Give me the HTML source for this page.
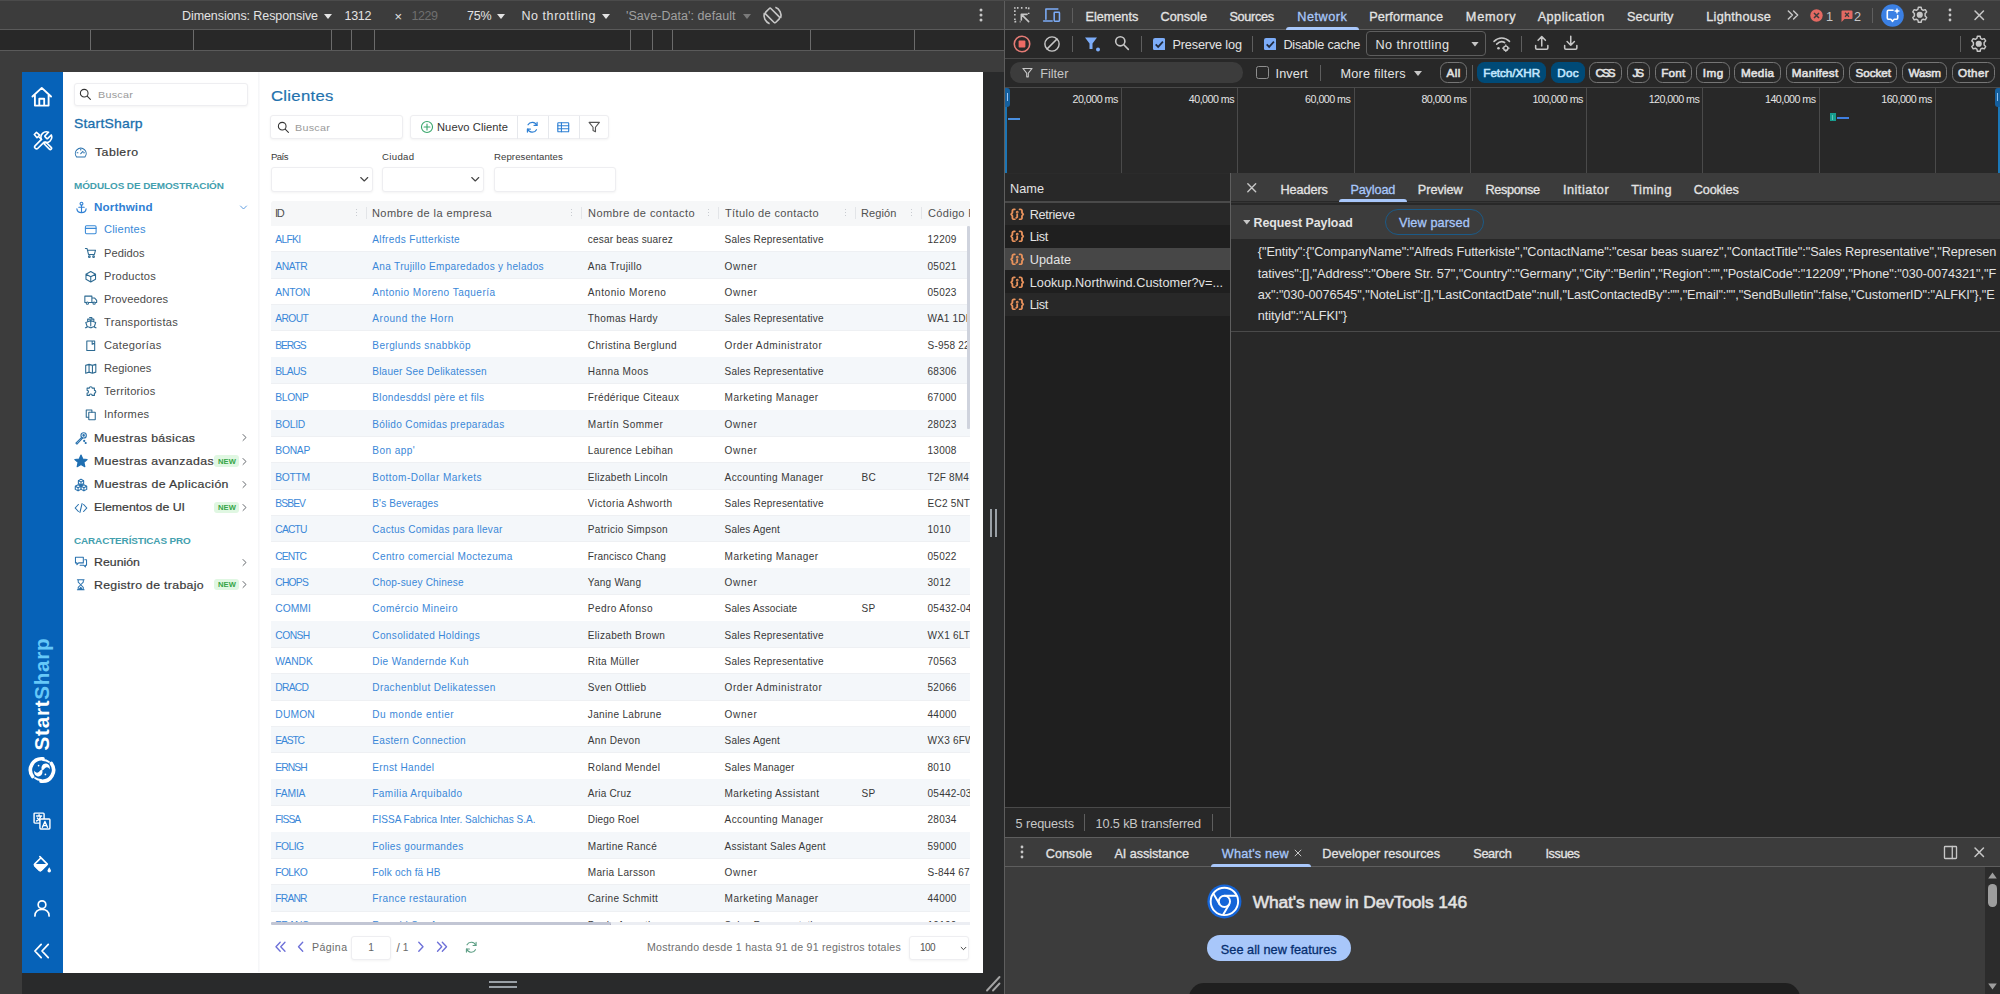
<!DOCTYPE html>
<html><head><meta charset="utf-8"><title>Clientes</title>
<style>
html,body{margin:0;padding:0;background:#282828;}
body{width:2000px;height:994px;position:relative;overflow:hidden;font-family:"Liberation Sans",sans-serif;}
body div,body span,body svg{position:absolute;box-sizing:border-box;}
span{white-space:nowrap;}
.m{-webkit-text-stroke:0.3px currentColor;}
.m3{-webkit-text-stroke:0.55px currentColor;}
.m2{-webkit-text-stroke:0.2px currentColor;}
</style></head><body>
<div style="left:0px;top:0px;width:1004px;height:994px;background:#3c3c3c;"></div>
<div style="left:0px;top:29px;width:1004px;height:1px;background:#5a5a5a;"></div>
<div style="left:0px;top:30px;width:1004px;height:20px;background:#282828;"></div>
<div style="left:0px;top:50px;width:1004px;height:1px;background:#5a5a5a;"></div>
<div style="left:90px;top:30px;width:1px;height:20px;background:#6b6b6b;"></div>
<div style="left:193px;top:30px;width:1px;height:20px;background:#6b6b6b;"></div>
<div style="left:331px;top:30px;width:1px;height:20px;background:#6b6b6b;"></div>
<div style="left:351px;top:30px;width:1px;height:20px;background:#6b6b6b;"></div>
<div style="left:374px;top:30px;width:1px;height:20px;background:#6b6b6b;"></div>
<div style="left:630px;top:30px;width:1px;height:20px;background:#6b6b6b;"></div>
<div style="left:652px;top:30px;width:1px;height:20px;background:#6b6b6b;"></div>
<div style="left:672px;top:30px;width:1px;height:20px;background:#6b6b6b;"></div>
<div style="left:810px;top:30px;width:1px;height:20px;background:#6b6b6b;"></div>
<div style="left:914px;top:30px;width:1px;height:20px;background:#6b6b6b;"></div>
<div style="left:983px;top:72px;width:21px;height:922px;background:#292a2b;"></div>
<div style="left:22px;top:972px;width:982px;height:22px;background:#292a2b;"></div>
<div style="left:489px;top:981px;width:28px;height:2px;background:#9aa0a6;"></div>
<div style="left:489px;top:986px;width:28px;height:2px;background:#9aa0a6;"></div>
<div style="left:990px;top:509px;width:2px;height:28px;background:#9aa0a6;"></div>
<div style="left:995px;top:509px;width:2px;height:28px;background:#9aa0a6;"></div>
<svg style="left:985px;top:975px" width="16" height="17" viewBox="0 0 16 17"><path d="M2 15.5 L14.5 2 M8 15.5 L14.5 8.5" stroke="#a4a4a4" stroke-width="1.9" stroke-linecap="round" fill="none"/></svg>
<span style="left:182px;top:9px;line-height:14px;font-size:12.5px;color:#e3e3e3;letter-spacing:-0.074px;">Dimensions: Responsive</span>
<svg style="left:323.5px;top:13.5px" width="8" height="5" viewBox="0 0 8 5"><path d="M0 0H8L4 5Z" fill="#e3e3e3"/></svg>
<span style="left:344.5px;top:9px;line-height:14px;font-size:12.5px;color:#e3e3e3;letter-spacing:-0.270px;">1312</span>
<span style="left:394.5px;top:9px;line-height:15px;font-size:13px;color:#e3e3e3;">×</span>
<span style="left:411.5px;top:9px;line-height:14px;font-size:12.5px;color:#6f6f6f;letter-spacing:-0.436px;">1229</span>
<span style="left:467px;top:9px;line-height:14px;font-size:12.5px;color:#e3e3e3;letter-spacing:-0.259px;">75%</span>
<svg style="left:496.5px;top:13.5px" width="8" height="5" viewBox="0 0 8 5"><path d="M0 0H8L4 5Z" fill="#e3e3e3"/></svg>
<span style="left:521.5px;top:9px;line-height:14px;font-size:12.5px;color:#e3e3e3;letter-spacing:0.550px;">No throttling</span>
<svg style="left:601.5px;top:13.5px" width="8" height="5" viewBox="0 0 8 5"><path d="M0 0H8L4 5Z" fill="#e3e3e3"/></svg>
<span style="left:626px;top:9px;line-height:14px;font-size:12.5px;color:#a0a0a0;letter-spacing:0.063px;">'Save-Data': default</span>
<svg style="left:742.5px;top:13.5px" width="8" height="5" viewBox="0 0 8 5"><path d="M0 0H8L4 5Z" fill="#7a7a7a"/></svg>
<svg style="left:761px;top:4px" width="23" height="23" viewBox="0 0 24 24" fill="none" stroke="#c7c7c7" stroke-width="1.7"><rect x="8" y="4.5" width="8" height="15" rx="1.5" transform="rotate(-45 12 12)"/><path d="M3.5 9.5 A9 9 0 0 0 9 20.5 M20.5 14.5 A9 9 0 0 0 15 3.5"/></svg>
<svg style="left:977.5px;top:7.0px" width="6" height="16" viewBox="0 0 6 16"><circle cx="3" cy="3" r="1.5" fill="#c7c7c7"/><circle cx="3" cy="8" r="1.5" fill="#c7c7c7"/><circle cx="3" cy="13" r="1.5" fill="#c7c7c7"/></svg>
<div style="left:22px;top:72px;width:961.2px;height:900.7px;background:#ffffff;"></div>
<div style="left:22px;top:72px;width:40.6px;height:900.7px;background:#0662b8;"></div>
<svg style="left:30.45px;top:85.25px" width="23.5" height="23.5" viewBox="0 0 24 24" fill="none" stroke="#ffffff" stroke-width="1.9" stroke-linecap="round" stroke-linejoin="round" ><path d="M2.5 11.8 L12 3 L21.5 11.800 M5 10.2 V21 H19 V10.2 M9.5 21 V14 H14.5 V21"/></svg>
<svg style="left:31.55px;top:130.45px" width="21.5" height="21.5" viewBox="0 0 24 24" fill="none" stroke="#ffffff" stroke-width="1.8" stroke-linecap="round" stroke-linejoin="round" ><path d="M14.7 6.3 a1 1 0 0 0 0 1.4 l1.6 1.6 a1 1 0 0 0 1.4 0 l3.77 -3.77 a6 6 0 0 1 -7.94 7.94 l-6.91 6.91 a2.12 2.12 0 0 1 -3 -3 l6.91 -6.91 a6 6 0 0 1 7.94 -7.94 l-3.76 3.76 z"/><path d="M2.6 5 L5 2.6 L8.6 5.6 L5.6 8.6 Z M7.3 7.3 L10.6 10.6 M13.4 15.4 L15.4 13.4 L21.4 19.4 a1.4 1.4 0 0 1 -2 2 Z"/></svg>
<span style="left:42px;top:693.8px;transform:translate(-50%,-50%) rotate(-90deg);font-size:20.6px;font-weight:700;color:#fff;letter-spacing:0.75px;line-height:24px">Start<span style="position:static;color:#66c8f8;">Sharp</span></span>
<svg style="left:28.30px;top:755.80px" width="28" height="28" viewBox="0 0 28 28" fill="none" ><g stroke="#fff" fill="none" stroke-linecap="round"><path d="M15 2.8 A11.2 11.2 0 0 0 4.600 20.5" stroke-width="3.6"/><path d="M13 25.2 A11.2 11.2 0 0 0 23.4 7.5" stroke-width="3.6"/><path d="M7 22 A10 10 0 0 0 13 24" stroke-width="1.8"/><path d="M21 6 A10 10 0 0 0 15 4" stroke-width="1.8"/></g><g fill="#fff"><path d="M14 14.5 C12.4 10.8 14.8 7.2 18.2 7.6 C21 8 22.4 10.6 21.6 13.4 C20.8 11.2 18.6 10.8 17.2 12 C16 13 15.800 14.2 14 14.5Z"/><path d="M14 13.5 C15.6 17.2 13.2 20.8 9.8 20.4 C7 20 5.6 17.4 6.4 14.6 C7.2 16.8 9.4 17.2 10.8 16 C12 15 12.200 13.8 14 13.5Z"/></g><circle cx="10.6" cy="9.6" r="0.85" fill="#fff"/><circle cx="17.4" cy="18.4" r="0.85" fill="#fff"/></svg>
<svg style="left:32.00px;top:811.00px" width="20" height="20" viewBox="0 0 24 24" fill="none" stroke="#ffffff" stroke-width="1.7" stroke-linecap="round" stroke-linejoin="round" ><rect x="2.5" y="2.5" width="12" height="12" rx="1"/><rect x="9.5" y="9.5" width="12" height="12" rx="1" fill="#0662b8"/><path d="M5.5 6 H11.5 M8.5 4.5 V6 M10.5 6 C10 9 8 11 5.5 12 M6.5 8.5 C7.5 10 8 10.5 9 11"/><path d="M12.5 19.5 L15.5 12.5 L18.5 19.5 M13.5 17.5 H17.5" /></svg>
<svg style="left:31.50px;top:853.50px" width="21" height="21" viewBox="0 0 24 24" fill="none" stroke="#ffffff" stroke-width="1.9" stroke-linecap="round" stroke-linejoin="round" ><path d="M9 3 L17.5 11.5 L10.5 18.5 A1.5 1.5 0 0 1 8.4 18.5 L3.2 13.3 A1.5 1.5 0 0 1 3.2 11.2 L10.3 4.3"/><path d="M3.5 12.5 H16.5 L10.5 18.5 A1.5 1.5 0 0 1 8.4 18.5 L3.2 13.3Z" fill="#fff"/><path d="M19.7 15 C21 17 21.7 18.2 21.7 19.2 A2 2 0 0 1 17.7 19.2 C17.7 18.2 18.4 17 19.7 15Z" fill="#fff" stroke="none"/></svg>
<svg style="left:32.00px;top:898.00px" width="20" height="20" viewBox="0 0 24 24" fill="none" stroke="#ffffff" stroke-width="2" stroke-linecap="round" stroke-linejoin="round" ><circle cx="12" cy="8" r="4.6"/><path d="M3.5 21.5 C3.5 16 7.5 13.6 12 13.6 C16.5 13.6 20.5 16 20.5 21.5"/></svg>
<svg style="left:31.50px;top:940.50px" width="20" height="20" viewBox="0 0 24 24" fill="none" stroke="#ffffff" stroke-width="2.1" stroke-linecap="round" stroke-linejoin="round" ><path d="M11 4 L3.5 12 L11 20 M19.5 4 L12 12 L19.5 20"/></svg>
<div style="left:258px;top:72px;width:2px;height:900px;background:linear-gradient(90deg,#f4f5f7,#fbfbfc);"></div>
<div style="left:73.5px;top:82.5px;width:174px;height:23.5px;background:#fff;border:1px solid #eeeef1;border-radius:3px;box-shadow:0 1px 2.500px rgba(0,0,0,.05);"></div>
<svg style="left:78.10px;top:87.10px" width="14.2" height="14.2" viewBox="0 0 24 24" fill="none" stroke="#333" stroke-width="1.8" stroke-linecap="round" stroke-linejoin="round" ><circle cx="10.5" cy="10.5" r="6.5"/><path d="M15.5 15.5 L21 21"/></svg>
<span style="left:97.7px;top:89px;line-height:11px;font-size:9.8px;color:#9a9a9a;letter-spacing:0.227px;transform:scaleX(1.1);transform-origin:0 0;">Buscar</span>
<span class="m" style="left:73.8px;top:116px;line-height:15px;font-size:13.2px;color:#1b6fad;letter-spacing:0.179px;transform:scaleX(1.06);transform-origin:0 0;">StartSharp</span>
<svg style="left:74.45px;top:145.85px" width="13.5" height="13.5" viewBox="0 0 24 24" fill="none" stroke="#2a72ae" stroke-width="1.9" stroke-linecap="round" stroke-linejoin="round" ><path d="M4.6 19.5 A9.6 9.6 0 1 1 19.400 19.5 Z"/><path d="M12 13.5 L16 9.500 M12 5.5 V7 M5.5 12 H7 M17 12 H18.5"/></svg>
<span class="m2" style="left:94.5px;top:146px;line-height:12px;font-size:11.2px;color:#3a3a3a;letter-spacing:0.408px;transform:scaleX(1.1);transform-origin:0 0;">Tablero</span>
<span style="left:73.7px;top:181px;line-height:10px;font-size:9.2px;color:#43a0ae;font-weight:700;letter-spacing:-0.072px;transform:scaleX(1.08);transform-origin:0 0;">MÓDULOS DE DEMOSTRACIÓN</span>
<svg style="left:74.50px;top:200.50px" width="13" height="13" viewBox="0 0 24 24" fill="none" stroke="#2f80d4" stroke-width="2.1" stroke-linecap="round" stroke-linejoin="round" ><circle cx="12" cy="5" r="2.6"/><path d="M12 7.6 V21.5 M7 11.5 H17 M3.5 14.5 C4 19 8 21.5 12 21.5 C16 21.5 20 19 20.5 14.5"/></svg>
<span style="left:94.3px;top:201px;line-height:12px;font-size:11px;color:#2f80d4;font-weight:700;letter-spacing:0.113px;transform:scaleX(1.06);transform-origin:0 0;">Northwind</span>
<svg style="left:239.20px;top:202.80px" width="9" height="9" viewBox="0 0 24 24" fill="none" stroke="#5a9be0" stroke-width="2.6" stroke-linecap="round" stroke-linejoin="round" ><path d="M4 8 L12 16 L20 8"/></svg>
<svg style="left:84.25px;top:222.95px" width="13.5" height="13.5" viewBox="0 0 24 24" fill="none" stroke="#3a8ad8" stroke-width="1.9" stroke-linecap="round" stroke-linejoin="round" ><rect x="2.5" y="5" width="19" height="14" rx="2"/><path d="M2.5 9.5 H21.5"/></svg>
<span style="left:104.4px;top:224px;line-height:11px;font-size:10.4px;color:#3a8ad8;letter-spacing:0.173px;transform:scaleX(1.07);transform-origin:0 0;">Clientes</span>
<svg style="left:84.25px;top:246.45px" width="13.5" height="13.5" viewBox="0 0 24 24" fill="none" stroke="#2d6a92" stroke-width="1.9" stroke-linecap="round" stroke-linejoin="round" ><path d="M2.5 4.5 H5.5 L8 15 H18.5 L20.5 7.5 H6.3"/><circle cx="9.5" cy="19" r="1.5"/><circle cx="17" cy="19" r="1.5"/></svg>
<span style="left:104.4px;top:248px;line-height:11px;font-size:10.4px;color:#4a4a4a;letter-spacing:0.075px;transform:scaleX(1.07);transform-origin:0 0;">Pedidos</span>
<svg style="left:84.25px;top:269.85px" width="13.5" height="13.5" viewBox="0 0 24 24" fill="none" stroke="#2d6a92" stroke-width="1.9" stroke-linecap="round" stroke-linejoin="round" ><path d="M12 2.8 L20.5 7.4 V16.6 L12 21.2 L3.5 16.6 V7.4 Z M3.5 7.4 L12 12 L20.5 7.4 M12 12 V21.2"/></svg>
<span style="left:104.4px;top:271px;line-height:11px;font-size:10.4px;color:#4a4a4a;letter-spacing:0.198px;transform:scaleX(1.07);transform-origin:0 0;">Productos</span>
<svg style="left:84.25px;top:293.25px" width="13.5" height="13.5" viewBox="0 0 24 24" fill="none" stroke="#2d6a92" stroke-width="1.9" stroke-linecap="round" stroke-linejoin="round" ><path d="M1.5 5.5 H14 V17 H1.5 Z M14 9 H19 L22.5 13 V17 H14"/><circle cx="6" cy="18" r="2" fill="#fff"/><circle cx="18" cy="18" r="2" fill="#fff"/></svg>
<span style="left:104.4px;top:294px;line-height:11px;font-size:10.4px;color:#4a4a4a;letter-spacing:0.094px;transform:scaleX(1.07);transform-origin:0 0;">Proveedores</span>
<svg style="left:84.25px;top:315.65px" width="13.5" height="13.5" viewBox="0 0 24 24" fill="none" stroke="#2d6a92" stroke-width="1.9" stroke-linecap="round" stroke-linejoin="round" ><path d="M10 2.8 H14 V5.5 M6.5 10.3 V5.5 H17.5 V10.3 M12 8.2 L3.2 11.6 L5.6 18.6 M12 8.2 L20.8 11.6 L18.4 18.6 M12 8.2 V17.5 M2.5 20.8 C4.5 20.8 5 19 7 19 C9 19 10 20.8 12 20.8 C14 20.8 15 19 17 19 C19 19 19.5 20.8 21.5 20.8"/></svg>
<span style="left:104.4px;top:317px;line-height:11px;font-size:10.4px;color:#4a4a4a;letter-spacing:0.274px;transform:scaleX(1.07);transform-origin:0 0;">Transportistas</span>
<svg style="left:84.25px;top:338.85px" width="13.5" height="13.5" viewBox="0 0 24 24" fill="none" stroke="#2d6a92" stroke-width="1.9" stroke-linecap="round" stroke-linejoin="round" ><path d="M5 3.5 H19 V20.5 H5 Z M14.5 3.5 V9.5 L16.7 8 L19 9.5"/></svg>
<span style="left:104.4px;top:340px;line-height:11px;font-size:10.4px;color:#4a4a4a;letter-spacing:0.298px;transform:scaleX(1.07);transform-origin:0 0;">Categorías</span>
<svg style="left:84.25px;top:361.95px" width="13.5" height="13.5" viewBox="0 0 24 24" fill="none" stroke="#2d6a92" stroke-width="1.9" stroke-linecap="round" stroke-linejoin="round" ><path d="M3 6 L9 4 L15 6 L21 4 V18 L15 20 L9 18 L3 20 Z M9 4 V18 M15 6 V20"/></svg>
<span style="left:104.4px;top:363px;line-height:11px;font-size:10.4px;color:#4a4a4a;letter-spacing:0.038px;transform:scaleX(1.07);transform-origin:0 0;">Regiones</span>
<svg style="left:84.25px;top:384.65px" width="13.5" height="13.5" viewBox="0 0 24 24" fill="none" stroke="#2d6a92" stroke-width="1.9" stroke-linecap="round" stroke-linejoin="round" ><path d="M9.5 5.5 A2.5 2.5 0 1 1 14.5 5.5 H18.5 V9.5 A2.5 2.5 0 1 1 18.5 14.5 V18.5 H14.5 A2.5 2.5 0 1 0 9.5 18.5 H5.5 V14.5 A2.5 2.5 0 1 0 5.5 9.5 V5.5 Z"/></svg>
<span style="left:104.4px;top:386px;line-height:11px;font-size:10.4px;color:#4a4a4a;letter-spacing:0.229px;transform:scaleX(1.07);transform-origin:0 0;">Territorios</span>
<svg style="left:84.25px;top:407.95px" width="13.5" height="13.5" viewBox="0 0 24 24" fill="none" stroke="#2d6a92" stroke-width="1.9" stroke-linecap="round" stroke-linejoin="round" ><path d="M4 3.5 H14 V7.5 M4 3.5 V16.5 H8"/><rect x="8.5" y="7.5" width="11.5" height="13.5" rx="0.5"/></svg>
<span style="left:104.4px;top:409px;line-height:11px;font-size:10.4px;color:#4a4a4a;letter-spacing:0.255px;transform:scaleX(1.07);transform-origin:0 0;">Informes</span>
<svg style="left:74.00px;top:430.90px" width="14" height="14" viewBox="0 0 24 24" fill="none" stroke="#2a72ae" stroke-width="1.9" stroke-linecap="round" stroke-linejoin="round" ><circle cx="16.5" cy="7.5" r="4.6"/><circle cx="16.5" cy="7.5" r="1.2" fill="#2a72ae"/><path d="M13.2 10.8 L3.2 20.8 L5 22.4 L14.8 12.4" /><circle cx="17.5" cy="17" r="0.9" fill="#2a72ae"/><circle cx="20" cy="20.5" r="0.9" fill="#2a72ae"/></svg>
<span class="m2" style="left:94.3px;top:432px;line-height:12px;font-size:11.2px;color:#3a3a3a;letter-spacing:0.318px;transform:scaleX(1.1);transform-origin:0 0;">Muestras básicas</span>
<svg style="left:240.00px;top:433.40px" width="9" height="9" viewBox="0 0 24 24" fill="none" stroke="#5f6368" stroke-width="2.6" stroke-linecap="round" stroke-linejoin="round" ><path d="M8 4 L16 12 L8 20"/></svg>
<svg style="left:74.00px;top:454.30px" width="14" height="14" viewBox="0 0 24 24" fill="none" stroke="#2a72ae" stroke-width="1.9" stroke-linecap="round" stroke-linejoin="round" ><path d="M12 1.8 L15.1 8.6 L22.5 9.4 L17 14.4 L18.6 21.8 L12 18 L5.4 21.8 L7 14.4 L1.5 9.4 L8.9 8.6 Z" fill="#1f6fb2" stroke="#1f6fb2"/></svg>
<span class="m2" style="left:94.3px;top:455px;line-height:12px;font-size:11.2px;color:#3a3a3a;letter-spacing:0.322px;transform:scaleX(1.1);transform-origin:0 0;">Muestras avanzadas</span>
<svg style="left:240.00px;top:456.80px" width="9" height="9" viewBox="0 0 24 24" fill="none" stroke="#5f6368" stroke-width="2.6" stroke-linecap="round" stroke-linejoin="round" ><path d="M8 4 L16 12 L8 20"/></svg>
<div style="left:214.3px;top:455.3px;width:24.4px;height:11.6px;background:#e0f7e2;border-radius:3px;"></div>
<span style="left:218px;top:457px;line-height:9px;font-size:7.6px;color:#36a546;font-weight:700;letter-spacing:0.084px;">NEW</span>
<svg style="left:74.00px;top:477.70px" width="14" height="14" viewBox="0 0 24 24" fill="none" stroke="#2a72ae" stroke-width="1.9" stroke-linecap="round" stroke-linejoin="round" ><path d="M12 2 L16.5 4.5 V9.5 L12 12 L7.500 9.5 V4.5 Z M7.5 4.5 L12 7 L16.5 4.5 M12 7 V12 M7 11.5 L11.8 14 V19.5 L7 22 L2.2 19.5 V14 Z M2.2 14 L7 16.6 L11.8 14 M7 16.6 V22 M17 11.5 L21.8 14 V19.5 L17 22 L12.2 19.5 V14 Z M12.2 14 L17 16.6 L21.8 14 M17 16.6 V22"/></svg>
<span class="m2" style="left:94.3px;top:478px;line-height:12px;font-size:11.2px;color:#3a3a3a;letter-spacing:0.342px;transform:scaleX(1.1);transform-origin:0 0;">Muestras de Aplicación</span>
<svg style="left:240.00px;top:480.20px" width="9" height="9" viewBox="0 0 24 24" fill="none" stroke="#5f6368" stroke-width="2.6" stroke-linecap="round" stroke-linejoin="round" ><path d="M8 4 L16 12 L8 20"/></svg>
<svg style="left:74.00px;top:500.50px" width="14" height="14" viewBox="0 0 24 24" fill="none" stroke="#2a72ae" stroke-width="1.9" stroke-linecap="round" stroke-linejoin="round" ><path d="M7.5 6 L2 12 L7.5 18 M16.5 6 L22 12 L16.5 18 M13.8 4.5 L10.2 19.5"/></svg>
<span class="m2" style="left:94.3px;top:501px;line-height:12px;font-size:11.2px;color:#3a3a3a;letter-spacing:0.001px;transform:scaleX(1.1);transform-origin:0 0;">Elementos de UI</span>
<svg style="left:240.00px;top:503.00px" width="9" height="9" viewBox="0 0 24 24" fill="none" stroke="#5f6368" stroke-width="2.6" stroke-linecap="round" stroke-linejoin="round" ><path d="M8 4 L16 12 L8 20"/></svg>
<div style="left:214.3px;top:501.5px;width:24.4px;height:11.6px;background:#e0f7e2;border-radius:3px;"></div>
<span style="left:218px;top:503px;line-height:9px;font-size:7.6px;color:#36a546;font-weight:700;letter-spacing:0.084px;">NEW</span>
<span style="left:73.7px;top:536px;line-height:10px;font-size:9.2px;color:#43a0ae;font-weight:700;letter-spacing:-0.120px;transform:scaleX(1.08);transform-origin:0 0;">CARACTERÍSTICAS PRO</span>
<svg style="left:74.00px;top:555.00px" width="14" height="14" viewBox="0 0 24 24" fill="none" stroke="#2a72ae" stroke-width="1.8" stroke-linecap="round" stroke-linejoin="round" ><path d="M2.5 4 H16 V13.5 H8 L5 16.5 V13.5 H2.5 Z M18.5 8 H21.5 V17.5 H19.5 V20.5 L16.5 17.5 H10.5"/></svg>
<span class="m2" style="left:94.3px;top:556px;line-height:12px;font-size:11.2px;color:#3a3a3a;letter-spacing:0.016px;transform:scaleX(1.1);transform-origin:0 0;">Reunión</span>
<svg style="left:240.00px;top:557.50px" width="9" height="9" viewBox="0 0 24 24" fill="none" stroke="#5f6368" stroke-width="2.6" stroke-linecap="round" stroke-linejoin="round" ><path d="M8 4 L16 12 L8 20"/></svg>
<svg style="left:74.25px;top:578.25px" width="13.5" height="13.5" viewBox="0 0 24 24" fill="none" stroke="#2a72ae" stroke-width="1.8" stroke-linecap="round" stroke-linejoin="round" ><path d="M6 3 H18 M6 21 H18 M7.5 3 V7.5 L12 12 L16.5 7.5 V3 M7.5 21 V16.5 L12 12 L16.5 16.5 V21"/><path d="M9 20.5 L12 16.5 L15 20.5Z" fill="#2a72ae"/></svg>
<span class="m2" style="left:94.3px;top:579px;line-height:12px;font-size:11.2px;color:#3a3a3a;letter-spacing:0.283px;transform:scaleX(1.1);transform-origin:0 0;">Registro de trabajo</span>
<svg style="left:240.00px;top:580.30px" width="9" height="9" viewBox="0 0 24 24" fill="none" stroke="#5f6368" stroke-width="2.6" stroke-linecap="round" stroke-linejoin="round" ><path d="M8 4 L16 12 L8 20"/></svg>
<div style="left:214.3px;top:578.8px;width:24.4px;height:11.6px;background:#e0f7e2;border-radius:3px;"></div>
<span style="left:218px;top:580px;line-height:9px;font-size:7.6px;color:#36a546;font-weight:700;letter-spacing:0.084px;">NEW</span>
<span class="m2" style="left:271px;top:87px;line-height:17px;font-size:15.2px;color:#1f72ae;letter-spacing:0.259px;transform:scaleX(1.1);transform-origin:0 0;">Clientes</span>
<div style="left:270.2px;top:115.3px;width:133.3px;height:24.2px;background:#fff;border:1px solid #eeeef1;border-radius:3px;box-shadow:0 1px 2.500px rgba(0,0,0,.05);"></div>
<svg style="left:276.10px;top:120.10px" width="14.2" height="14.2" viewBox="0 0 24 24" fill="none" stroke="#333" stroke-width="1.8" stroke-linecap="round" stroke-linejoin="round" ><circle cx="10.5" cy="10.5" r="6.5"/><path d="M15.5 15.5 L21 21"/></svg>
<span style="left:294.7px;top:122px;line-height:11px;font-size:9.8px;color:#9a9a9a;letter-spacing:0.227px;transform:scaleX(1.1);transform-origin:0 0;">Buscar</span>
<div style="left:410.2px;top:115.3px;width:199.3px;height:24.2px;background:#fff;border:1px solid #eeeef1;border-radius:3px;box-shadow:0 1px 2.500px rgba(0,0,0,.05);"></div>
<div style="left:516.5px;top:116px;width:1px;height:23px;background:#e6e8ec;"></div>
<div style="left:547.5px;top:116px;width:1px;height:23px;background:#e6e8ec;"></div>
<div style="left:578.5px;top:116px;width:1px;height:23px;background:#e6e8ec;"></div>
<svg style="left:419.50px;top:120.20px" width="14" height="14" viewBox="0 0 24 24" fill="none" stroke="#3aa76d" stroke-width="1.9" stroke-linecap="round" stroke-linejoin="round" ><circle cx="12" cy="12" r="9.5"/><path d="M12 7 V17 M7 12 H17"/></svg>
<span style="left:437px;top:122px;line-height:11px;font-size:10.3px;color:#333;letter-spacing:0.087px;transform:scaleX(1.08);transform-origin:0 0;">Nuevo Cliente</span>
<svg style="left:524.75px;top:119.95px" width="14.5" height="14.5" viewBox="0 0 24 24" fill="none" stroke="#2f80d4" stroke-width="2" stroke-linecap="round" stroke-linejoin="round" ><path d="M19.5 9 A8 8 0 0 0 5 8 M4.5 15 A8 8 0 0 0 19 16"/><path d="M20 4 V9 H15 M4 20 V15 H9"/></svg>
<svg style="left:555.75px;top:119.95px" width="14.5" height="14.5" viewBox="0 0 24 24" fill="none" stroke="#2f80d4" stroke-width="1.9" stroke-linecap="round" stroke-linejoin="round" ><rect x="3" y="4.5" width="18" height="15" rx="1"/><path d="M3 9.5 H21 M3 14.5 H21 M9 4.5 V19.5" /></svg>
<svg style="left:586.75px;top:119.95px" width="14.5" height="14.5" viewBox="0 0 24 24" fill="none" stroke="#555" stroke-width="1.9" stroke-linecap="round" stroke-linejoin="round" ><path d="M3.5 4 H20.5 L14 12 V19.5 L10 17.5 V12 Z"/></svg>
<span style="left:270.5px;top:152px;line-height:10px;font-size:8.9px;color:#3a3a3a;letter-spacing:-0.535px;transform:scaleX(1.08);transform-origin:0 0;">País</span>
<span style="left:382.3px;top:152px;line-height:10px;font-size:8.9px;color:#3a3a3a;letter-spacing:0.322px;transform:scaleX(1.08);transform-origin:0 0;">Ciudad</span>
<span style="left:493.5px;top:152px;line-height:10px;font-size:8.9px;color:#3a3a3a;letter-spacing:0.081px;transform:scaleX(1.08);transform-origin:0 0;">Representantes</span>
<div style="left:270.5px;top:167px;width:102px;height:24.5px;background:#fff;border:1px solid #eeeef1;border-radius:3px;box-shadow:0 1px 2.500px rgba(0,0,0,.05);"></div>
<svg style="left:358.95px;top:174.35px" width="10.5" height="10.5" viewBox="0 0 24 24" fill="none" stroke="#444" stroke-width="2.5" stroke-linecap="round" stroke-linejoin="round" ><path d="M4 8 L12 16 L20 8"/></svg>
<div style="left:382px;top:167px;width:102px;height:24.5px;background:#fff;border:1px solid #eeeef1;border-radius:3px;box-shadow:0 1px 2.500px rgba(0,0,0,.05);"></div>
<svg style="left:470.45px;top:174.35px" width="10.5" height="10.5" viewBox="0 0 24 24" fill="none" stroke="#444" stroke-width="2.5" stroke-linecap="round" stroke-linejoin="round" ><path d="M4 8 L12 16 L20 8"/></svg>
<div style="left:493.5px;top:167px;width:122px;height:24.5px;background:#fff;border:1px solid #eeeef1;border-radius:3px;box-shadow:0 1px 2.500px rgba(0,0,0,.05);"></div>
<div style="left:270.5px;top:200px;width:699.5px;height:725.2px;overflow:hidden;">
<div style="left:0;top:1px;width:700px;height:25px;background:#f6f7f8;border-radius:3px 3px 0 0"></div>
<span style="left:4.899999999999977px;top:8px;line-height:11px;font-size:10.3px;color:#505050;letter-spacing:-1.328px;transform:scaleX(1.07);transform-origin:0 0;">ID</span>
<span style="left:101.80000000000001px;top:8px;line-height:11px;font-size:10.3px;color:#505050;letter-spacing:0.374px;transform:scaleX(1.07);transform-origin:0 0;">Nombre de la empresa</span>
<span style="left:317.29999999999995px;top:8px;line-height:11px;font-size:10.3px;color:#505050;letter-spacing:0.404px;transform:scaleX(1.07);transform-origin:0 0;">Nombre de contacto</span>
<span style="left:454.1px;top:8px;line-height:11px;font-size:10.3px;color:#505050;letter-spacing:0.329px;transform:scaleX(1.07);transform-origin:0 0;">Título de contacto</span>
<span style="left:590.9px;top:8px;line-height:11px;font-size:10.3px;color:#505050;letter-spacing:0.107px;transform:scaleX(1.07);transform-origin:0 0;">Región</span>
<span style="left:657.1px;top:8px;line-height:11px;font-size:10.3px;color:#505050;letter-spacing:0.294px;transform:scaleX(1.07);transform-origin:0 0;">Código Postal</span>
<div style="left:95.0px;top:7px;width:1px;height:12px;background:#e3e5e8"></div>
<div style="left:85.5px;top:9px;width:1px;height:8px;background:repeating-linear-gradient(#c9ccd1 0 1px,transparent 1px 3px)"></div>
<div style="left:310.5px;top:7px;width:1px;height:12px;background:#e3e5e8"></div>
<div style="left:300.7px;top:9px;width:1px;height:8px;background:repeating-linear-gradient(#c9ccd1 0 1px,transparent 1px 3px)"></div>
<div style="left:447.3px;top:7px;width:1px;height:12px;background:#e3e5e8"></div>
<div style="left:437.5px;top:9px;width:1px;height:8px;background:repeating-linear-gradient(#c9ccd1 0 1px,transparent 1px 3px)"></div>
<div style="left:584.1px;top:7px;width:1px;height:12px;background:#e3e5e8"></div>
<div style="left:574.6px;top:9px;width:1px;height:8px;background:repeating-linear-gradient(#c9ccd1 0 1px,transparent 1px 3px)"></div>
<div style="left:650.0px;top:7px;width:1px;height:12px;background:#e3e5e8"></div>
<div style="left:640.2px;top:9px;width:1px;height:8px;background:repeating-linear-gradient(#c9ccd1 0 1px,transparent 1px 3px)"></div>
<div style="left:0;top:51.37px;width:700px;height:1px;background:#eef0f3"></div>
<span style="left:4.8px;top:34px;line-height:11px;font-size:10.3px;color:#3a87d8;letter-spacing:-0.731px;">ALFKI</span>
<span style="left:101.8px;top:34px;line-height:11px;font-size:10.05px;color:#3a87d8;letter-spacing:0.356px;">Alfreds Futterkiste</span>
<span style="left:317.3px;top:34px;line-height:11px;font-size:10.05px;color:#383838;letter-spacing:0.174px;">cesar beas suarez</span>
<span style="left:454.1px;top:34px;line-height:11px;font-size:10.05px;color:#383838;letter-spacing:0.183px;">Sales Representative</span>
<span style="left:657.1px;top:34px;line-height:11px;font-size:10.05px;color:#383838;letter-spacing:0.18px;">12209</span>
<div style="left:0;top:51.87px;width:700px;height:26.37px;background:#f4f7fa"></div>
<div style="left:0;top:77.74px;width:700px;height:1px;background:#eef0f3"></div>
<span style="left:4.8px;top:61px;line-height:11px;font-size:10.3px;color:#3a87d8;letter-spacing:-0.436px;">ANATR</span>
<span style="left:101.8px;top:61px;line-height:11px;font-size:10.05px;color:#3a87d8;letter-spacing:0.318px;">Ana Trujillo Emparedados y helados</span>
<span style="left:317.3px;top:61px;line-height:11px;font-size:10.05px;color:#383838;letter-spacing:0.380px;">Ana Trujillo</span>
<span style="left:454.1px;top:61px;line-height:11px;font-size:10.05px;color:#383838;letter-spacing:0.675px;">Owner</span>
<span style="left:657.1px;top:61px;line-height:11px;font-size:10.05px;color:#383838;letter-spacing:0.18px;">05021</span>
<div style="left:0;top:104.11px;width:700px;height:1px;background:#eef0f3"></div>
<span style="left:4.8px;top:87px;line-height:11px;font-size:10.3px;color:#3a87d8;letter-spacing:-0.216px;">ANTON</span>
<span style="left:101.8px;top:87px;line-height:11px;font-size:10.05px;color:#3a87d8;letter-spacing:0.460px;">Antonio Moreno Taquería</span>
<span style="left:317.3px;top:87px;line-height:11px;font-size:10.05px;color:#383838;letter-spacing:0.550px;">Antonio Moreno</span>
<span style="left:454.1px;top:87px;line-height:11px;font-size:10.05px;color:#383838;letter-spacing:0.675px;">Owner</span>
<span style="left:657.1px;top:87px;line-height:11px;font-size:10.05px;color:#383838;letter-spacing:0.18px;">05023</span>
<div style="left:0;top:104.61px;width:700px;height:26.37px;background:#f4f7fa"></div>
<div style="left:0;top:130.48px;width:700px;height:1px;background:#eef0f3"></div>
<span style="left:4.8px;top:113px;line-height:11px;font-size:10.3px;color:#3a87d8;letter-spacing:-0.638px;">AROUT</span>
<span style="left:101.8px;top:113px;line-height:11px;font-size:10.05px;color:#3a87d8;letter-spacing:0.525px;">Around the Horn</span>
<span style="left:317.3px;top:113px;line-height:11px;font-size:10.05px;color:#383838;letter-spacing:0.354px;">Thomas Hardy</span>
<span style="left:454.1px;top:113px;line-height:11px;font-size:10.05px;color:#383838;letter-spacing:0.183px;">Sales Representative</span>
<span style="left:657.1px;top:113px;line-height:11px;font-size:10.05px;color:#383838;letter-spacing:0.18px;">WA1 1DP</span>
<div style="left:0;top:156.85px;width:700px;height:1px;background:#eef0f3"></div>
<span style="left:4.8px;top:140px;line-height:11px;font-size:10.3px;color:#3a87d8;letter-spacing:-1.165px;">BERGS</span>
<span style="left:101.8px;top:140px;line-height:11px;font-size:10.05px;color:#3a87d8;letter-spacing:0.398px;">Berglunds snabbköp</span>
<span style="left:317.3px;top:140px;line-height:11px;font-size:10.05px;color:#383838;letter-spacing:0.354px;">Christina Berglund</span>
<span style="left:454.1px;top:140px;line-height:11px;font-size:10.05px;color:#383838;letter-spacing:0.559px;">Order Administrator</span>
<span style="left:657.1px;top:140px;line-height:11px;font-size:10.05px;color:#383838;letter-spacing:0.18px;">S-958 22</span>
<div style="left:0;top:157.35px;width:700px;height:26.37px;background:#f4f7fa"></div>
<div style="left:0;top:183.22px;width:700px;height:1px;background:#eef0f3"></div>
<span style="left:4.8px;top:166px;line-height:11px;font-size:10.3px;color:#3a87d8;letter-spacing:-0.595px;">BLAUS</span>
<span style="left:101.8px;top:166px;line-height:11px;font-size:10.05px;color:#3a87d8;letter-spacing:0.193px;">Blauer See Delikatessen</span>
<span style="left:317.3px;top:166px;line-height:11px;font-size:10.05px;color:#383838;letter-spacing:0.391px;">Hanna Moos</span>
<span style="left:454.1px;top:166px;line-height:11px;font-size:10.05px;color:#383838;letter-spacing:0.183px;">Sales Representative</span>
<span style="left:657.1px;top:166px;line-height:11px;font-size:10.05px;color:#383838;letter-spacing:0.18px;">68306</span>
<div style="left:0;top:209.59px;width:700px;height:1px;background:#eef0f3"></div>
<span style="left:4.8px;top:192px;line-height:11px;font-size:10.3px;color:#3a87d8;letter-spacing:-0.355px;">BLONP</span>
<span style="left:101.8px;top:192px;line-height:11px;font-size:10.05px;color:#3a87d8;letter-spacing:0.343px;">Blondesddsl père et fils</span>
<span style="left:317.3px;top:192px;line-height:11px;font-size:10.05px;color:#383838;letter-spacing:0.337px;">Frédérique Citeaux</span>
<span style="left:454.1px;top:192px;line-height:11px;font-size:10.05px;color:#383838;letter-spacing:0.432px;">Marketing Manager</span>
<span style="left:657.1px;top:192px;line-height:11px;font-size:10.05px;color:#383838;letter-spacing:0.18px;">67000</span>
<div style="left:0;top:210.09px;width:700px;height:26.37px;background:#f4f7fa"></div>
<div style="left:0;top:235.96px;width:700px;height:1px;background:#eef0f3"></div>
<span style="left:4.8px;top:219px;line-height:11px;font-size:10.3px;color:#3a87d8;letter-spacing:-0.253px;">BOLID</span>
<span style="left:101.8px;top:219px;line-height:11px;font-size:10.05px;color:#3a87d8;letter-spacing:0.328px;">Bólido Comidas preparadas</span>
<span style="left:317.3px;top:219px;line-height:11px;font-size:10.05px;color:#383838;letter-spacing:0.488px;">Martín Sommer</span>
<span style="left:454.1px;top:219px;line-height:11px;font-size:10.05px;color:#383838;letter-spacing:0.675px;">Owner</span>
<span style="left:657.1px;top:219px;line-height:11px;font-size:10.05px;color:#383838;letter-spacing:0.18px;">28023</span>
<div style="left:0;top:262.33px;width:700px;height:1px;background:#eef0f3"></div>
<span style="left:4.8px;top:245px;line-height:11px;font-size:10.3px;color:#3a87d8;letter-spacing:-0.265px;">BONAP</span>
<span style="left:101.8px;top:245px;line-height:11px;font-size:10.05px;color:#3a87d8;letter-spacing:0.420px;">Bon app'</span>
<span style="left:317.3px;top:245px;line-height:11px;font-size:10.05px;color:#383838;letter-spacing:0.309px;">Laurence Lebihan</span>
<span style="left:454.1px;top:245px;line-height:11px;font-size:10.05px;color:#383838;letter-spacing:0.675px;">Owner</span>
<span style="left:657.1px;top:245px;line-height:11px;font-size:10.05px;color:#383838;letter-spacing:0.18px;">13008</span>
<div style="left:0;top:262.83px;width:700px;height:26.37px;background:#f4f7fa"></div>
<div style="left:0;top:288.70px;width:700px;height:1px;background:#eef0f3"></div>
<span style="left:4.8px;top:272px;line-height:11px;font-size:10.3px;color:#3a87d8;letter-spacing:-0.336px;">BOTTM</span>
<span style="left:101.8px;top:272px;line-height:11px;font-size:10.05px;color:#3a87d8;letter-spacing:0.462px;">Bottom-Dollar Markets</span>
<span style="left:317.3px;top:272px;line-height:11px;font-size:10.05px;color:#383838;letter-spacing:0.245px;">Elizabeth Lincoln</span>
<span style="left:454.1px;top:272px;line-height:11px;font-size:10.05px;color:#383838;letter-spacing:0.371px;">Accounting Manager</span>
<span style="left:590.9px;top:272px;line-height:11px;font-size:10.05px;color:#383838;letter-spacing:0.32px;">BC</span>
<span style="left:657.1px;top:272px;line-height:11px;font-size:10.05px;color:#383838;letter-spacing:0.18px;">T2F 8M4</span>
<div style="left:0;top:315.07px;width:700px;height:1px;background:#eef0f3"></div>
<span style="left:4.8px;top:298px;line-height:11px;font-size:10.3px;color:#3a87d8;letter-spacing:-0.913px;">BSBEV</span>
<span style="left:101.8px;top:298px;line-height:11px;font-size:10.05px;color:#3a87d8;letter-spacing:0.126px;">B's Beverages</span>
<span style="left:317.3px;top:298px;line-height:11px;font-size:10.05px;color:#383838;letter-spacing:0.434px;">Victoria Ashworth</span>
<span style="left:454.1px;top:298px;line-height:11px;font-size:10.05px;color:#383838;letter-spacing:0.183px;">Sales Representative</span>
<span style="left:657.1px;top:298px;line-height:11px;font-size:10.05px;color:#383838;letter-spacing:0.18px;">EC2 5NT</span>
<div style="left:0;top:315.57px;width:700px;height:26.37px;background:#f4f7fa"></div>
<div style="left:0;top:341.44px;width:700px;height:1px;background:#eef0f3"></div>
<span style="left:4.8px;top:324px;line-height:11px;font-size:10.3px;color:#3a87d8;letter-spacing:-0.819px;">CACTU</span>
<span style="left:101.8px;top:324px;line-height:11px;font-size:10.05px;color:#3a87d8;letter-spacing:0.266px;">Cactus Comidas para llevar</span>
<span style="left:317.3px;top:324px;line-height:11px;font-size:10.05px;color:#383838;letter-spacing:0.300px;">Patricio Simpson</span>
<span style="left:454.1px;top:324px;line-height:11px;font-size:10.05px;color:#383838;letter-spacing:0.156px;">Sales Agent</span>
<span style="left:657.1px;top:324px;line-height:11px;font-size:10.05px;color:#383838;letter-spacing:0.18px;">1010</span>
<div style="left:0;top:367.81px;width:700px;height:1px;background:#eef0f3"></div>
<span style="left:4.8px;top:351px;line-height:11px;font-size:10.3px;color:#3a87d8;letter-spacing:-0.944px;">CENTC</span>
<span style="left:101.8px;top:351px;line-height:11px;font-size:10.05px;color:#3a87d8;letter-spacing:0.380px;">Centro comercial Moctezuma</span>
<span style="left:317.3px;top:351px;line-height:11px;font-size:10.05px;color:#383838;letter-spacing:0.152px;">Francisco Chang</span>
<span style="left:454.1px;top:351px;line-height:11px;font-size:10.05px;color:#383838;letter-spacing:0.432px;">Marketing Manager</span>
<span style="left:657.1px;top:351px;line-height:11px;font-size:10.05px;color:#383838;letter-spacing:0.18px;">05022</span>
<div style="left:0;top:368.31px;width:700px;height:26.37px;background:#f4f7fa"></div>
<div style="left:0;top:394.18px;width:700px;height:1px;background:#eef0f3"></div>
<span style="left:4.8px;top:377px;line-height:11px;font-size:10.3px;color:#3a87d8;letter-spacing:-0.782px;">CHOPS</span>
<span style="left:101.8px;top:377px;line-height:11px;font-size:10.05px;color:#3a87d8;letter-spacing:0.196px;">Chop-suey Chinese</span>
<span style="left:317.3px;top:377px;line-height:11px;font-size:10.05px;color:#383838;letter-spacing:0.225px;">Yang Wang</span>
<span style="left:454.1px;top:377px;line-height:11px;font-size:10.05px;color:#383838;letter-spacing:0.675px;">Owner</span>
<span style="left:657.1px;top:377px;line-height:11px;font-size:10.05px;color:#383838;letter-spacing:0.18px;">3012</span>
<div style="left:0;top:420.55px;width:700px;height:1px;background:#eef0f3"></div>
<span style="left:4.8px;top:403px;line-height:11px;font-size:10.3px;color:#3a87d8;letter-spacing:0.007px;">COMMI</span>
<span style="left:101.8px;top:403px;line-height:11px;font-size:10.05px;color:#3a87d8;letter-spacing:0.437px;">Comércio Mineiro</span>
<span style="left:317.3px;top:403px;line-height:11px;font-size:10.05px;color:#383838;letter-spacing:0.405px;">Pedro Afonso</span>
<span style="left:454.1px;top:403px;line-height:11px;font-size:10.05px;color:#383838;letter-spacing:0.118px;">Sales Associate</span>
<span style="left:590.9px;top:403px;line-height:11px;font-size:10.05px;color:#383838;letter-spacing:0.32px;">SP</span>
<span style="left:657.1px;top:403px;line-height:11px;font-size:10.05px;color:#383838;letter-spacing:0.18px;">05432-043</span>
<div style="left:0;top:421.05px;width:700px;height:26.37px;background:#f4f7fa"></div>
<div style="left:0;top:446.92px;width:700px;height:1px;background:#eef0f3"></div>
<span style="left:4.8px;top:430px;line-height:11px;font-size:10.3px;color:#3a87d8;letter-spacing:-0.549px;">CONSH</span>
<span style="left:101.8px;top:430px;line-height:11px;font-size:10.05px;color:#3a87d8;letter-spacing:0.347px;">Consolidated Holdings</span>
<span style="left:317.3px;top:430px;line-height:11px;font-size:10.05px;color:#383838;letter-spacing:0.320px;">Elizabeth Brown</span>
<span style="left:454.1px;top:430px;line-height:11px;font-size:10.05px;color:#383838;letter-spacing:0.183px;">Sales Representative</span>
<span style="left:657.1px;top:430px;line-height:11px;font-size:10.05px;color:#383838;letter-spacing:0.18px;">WX1 6LT</span>
<div style="left:0;top:473.29px;width:700px;height:1px;background:#eef0f3"></div>
<span style="left:4.8px;top:456px;line-height:11px;font-size:10.3px;color:#3a87d8;letter-spacing:-0.114px;">WANDK</span>
<span style="left:101.8px;top:456px;line-height:11px;font-size:10.05px;color:#3a87d8;letter-spacing:0.379px;">Die Wandernde Kuh</span>
<span style="left:317.3px;top:456px;line-height:11px;font-size:10.05px;color:#383838;letter-spacing:0.337px;">Rita Müller</span>
<span style="left:454.1px;top:456px;line-height:11px;font-size:10.05px;color:#383838;letter-spacing:0.183px;">Sales Representative</span>
<span style="left:657.1px;top:456px;line-height:11px;font-size:10.05px;color:#383838;letter-spacing:0.18px;">70563</span>
<div style="left:0;top:473.79px;width:700px;height:26.37px;background:#f4f7fa"></div>
<div style="left:0;top:499.66px;width:700px;height:1px;background:#eef0f3"></div>
<span style="left:4.8px;top:482px;line-height:11px;font-size:10.3px;color:#3a87d8;letter-spacing:-0.731px;">DRACD</span>
<span style="left:101.8px;top:482px;line-height:11px;font-size:10.05px;color:#3a87d8;letter-spacing:0.373px;">Drachenblut Delikatessen</span>
<span style="left:317.3px;top:482px;line-height:11px;font-size:10.05px;color:#383838;letter-spacing:0.32px;">Sven Ottlieb</span>
<span style="left:454.1px;top:482px;line-height:11px;font-size:10.05px;color:#383838;letter-spacing:0.559px;">Order Administrator</span>
<span style="left:657.1px;top:482px;line-height:11px;font-size:10.05px;color:#383838;letter-spacing:0.18px;">52066</span>
<div style="left:0;top:526.03px;width:700px;height:1px;background:#eef0f3"></div>
<span style="left:4.8px;top:509px;line-height:11px;font-size:10.3px;color:#3a87d8;letter-spacing:0.148px;">DUMON</span>
<span style="left:101.8px;top:509px;line-height:11px;font-size:10.05px;color:#3a87d8;letter-spacing:0.500px;">Du monde entier</span>
<span style="left:317.3px;top:509px;line-height:11px;font-size:10.05px;color:#383838;letter-spacing:0.32px;">Janine Labrune</span>
<span style="left:454.1px;top:509px;line-height:11px;font-size:10.05px;color:#383838;letter-spacing:0.675px;">Owner</span>
<span style="left:657.1px;top:509px;line-height:11px;font-size:10.05px;color:#383838;letter-spacing:0.18px;">44000</span>
<div style="left:0;top:526.53px;width:700px;height:26.37px;background:#f4f7fa"></div>
<div style="left:0;top:552.40px;width:700px;height:1px;background:#eef0f3"></div>
<span style="left:4.8px;top:535px;line-height:11px;font-size:10.3px;color:#3a87d8;letter-spacing:-1.160px;">EASTC</span>
<span style="left:101.8px;top:535px;line-height:11px;font-size:10.05px;color:#3a87d8;letter-spacing:0.302px;">Eastern Connection</span>
<span style="left:317.3px;top:535px;line-height:11px;font-size:10.05px;color:#383838;letter-spacing:0.32px;">Ann Devon</span>
<span style="left:454.1px;top:535px;line-height:11px;font-size:10.05px;color:#383838;letter-spacing:0.156px;">Sales Agent</span>
<span style="left:657.1px;top:535px;line-height:11px;font-size:10.05px;color:#383838;letter-spacing:0.18px;">WX3 6FW</span>
<div style="left:0;top:578.77px;width:700px;height:1px;background:#eef0f3"></div>
<span style="left:4.8px;top:562px;line-height:11px;font-size:10.3px;color:#3a87d8;letter-spacing:-0.914px;">ERNSH</span>
<span style="left:101.8px;top:562px;line-height:11px;font-size:10.05px;color:#3a87d8;letter-spacing:0.327px;">Ernst Handel</span>
<span style="left:317.3px;top:562px;line-height:11px;font-size:10.05px;color:#383838;letter-spacing:0.375px;">Roland Mendel</span>
<span style="left:454.1px;top:562px;line-height:11px;font-size:10.05px;color:#383838;letter-spacing:0.183px;">Sales Manager</span>
<span style="left:657.1px;top:562px;line-height:11px;font-size:10.05px;color:#383838;letter-spacing:0.18px;">8010</span>
<div style="left:0;top:579.27px;width:700px;height:26.37px;background:#f4f7fa"></div>
<div style="left:0;top:605.14px;width:700px;height:1px;background:#eef0f3"></div>
<span style="left:4.8px;top:588px;line-height:11px;font-size:10.3px;color:#3a87d8;letter-spacing:-0.177px;">FAMIA</span>
<span style="left:101.8px;top:588px;line-height:11px;font-size:10.05px;color:#3a87d8;letter-spacing:0.425px;">Familia Arquibaldo</span>
<span style="left:317.3px;top:588px;line-height:11px;font-size:10.05px;color:#383838;letter-spacing:0.189px;">Aria Cruz</span>
<span style="left:454.1px;top:588px;line-height:11px;font-size:10.05px;color:#383838;letter-spacing:0.409px;">Marketing Assistant</span>
<span style="left:590.9px;top:588px;line-height:11px;font-size:10.05px;color:#383838;letter-spacing:0.32px;">SP</span>
<span style="left:657.1px;top:588px;line-height:11px;font-size:10.05px;color:#383838;letter-spacing:0.18px;">05442-030</span>
<div style="left:0;top:631.51px;width:700px;height:1px;background:#eef0f3"></div>
<span style="left:4.8px;top:614px;line-height:11px;font-size:10.3px;color:#3a87d8;letter-spacing:-0.966px;">FISSA</span>
<span style="left:101.8px;top:614px;line-height:11px;font-size:10.05px;color:#3a87d8;letter-spacing:0.005px;">FISSA Fabrica Inter. Salchichas S.A.</span>
<span style="left:317.3px;top:614px;line-height:11px;font-size:10.05px;color:#383838;letter-spacing:0.164px;">Diego Roel</span>
<span style="left:454.1px;top:614px;line-height:11px;font-size:10.05px;color:#383838;letter-spacing:0.371px;">Accounting Manager</span>
<span style="left:657.1px;top:614px;line-height:11px;font-size:10.05px;color:#383838;letter-spacing:0.18px;">28034</span>
<div style="left:0;top:632.01px;width:700px;height:26.37px;background:#f4f7fa"></div>
<div style="left:0;top:657.88px;width:700px;height:1px;background:#eef0f3"></div>
<span style="left:4.8px;top:641px;line-height:11px;font-size:10.3px;color:#3a87d8;letter-spacing:-0.551px;">FOLIG</span>
<span style="left:101.8px;top:641px;line-height:11px;font-size:10.05px;color:#3a87d8;letter-spacing:0.339px;">Folies gourmandes</span>
<span style="left:317.3px;top:641px;line-height:11px;font-size:10.05px;color:#383838;letter-spacing:0.304px;">Martine Rancé</span>
<span style="left:454.1px;top:641px;line-height:11px;font-size:10.05px;color:#383838;letter-spacing:0.190px;">Assistant Sales Agent</span>
<span style="left:657.1px;top:641px;line-height:11px;font-size:10.05px;color:#383838;letter-spacing:0.18px;">59000</span>
<div style="left:0;top:684.25px;width:700px;height:1px;background:#eef0f3"></div>
<span style="left:4.8px;top:667px;line-height:11px;font-size:10.3px;color:#3a87d8;letter-spacing:-0.628px;">FOLKO</span>
<span style="left:101.8px;top:667px;line-height:11px;font-size:10.05px;color:#3a87d8;letter-spacing:0.176px;">Folk och fä HB</span>
<span style="left:317.3px;top:667px;line-height:11px;font-size:10.05px;color:#383838;letter-spacing:0.302px;">Maria Larsson</span>
<span style="left:454.1px;top:667px;line-height:11px;font-size:10.05px;color:#383838;letter-spacing:0.675px;">Owner</span>
<span style="left:657.1px;top:667px;line-height:11px;font-size:10.05px;color:#383838;letter-spacing:0.18px;">S-844 67</span>
<div style="left:0;top:684.75px;width:700px;height:26.37px;background:#f4f7fa"></div>
<div style="left:0;top:710.62px;width:700px;height:1px;background:#eef0f3"></div>
<span style="left:4.8px;top:693px;line-height:11px;font-size:10.3px;color:#3a87d8;letter-spacing:-0.819px;">FRANR</span>
<span style="left:101.8px;top:693px;line-height:11px;font-size:10.05px;color:#3a87d8;letter-spacing:0.386px;">France restauration</span>
<span style="left:317.3px;top:693px;line-height:11px;font-size:10.05px;color:#383838;letter-spacing:0.315px;">Carine Schmitt</span>
<span style="left:454.1px;top:693px;line-height:11px;font-size:10.05px;color:#383838;letter-spacing:0.432px;">Marketing Manager</span>
<span style="left:657.1px;top:693px;line-height:11px;font-size:10.05px;color:#383838;letter-spacing:0.18px;">44000</span>
<div style="left:0;top:736.99px;width:700px;height:1px;background:#eef0f3"></div>
<span style="left:4.8px;top:720px;line-height:11px;font-size:10.3px;color:#3a87d8;letter-spacing:-0.3px;">FRANS</span>
<span style="left:101.8px;top:720px;line-height:11px;font-size:10.05px;color:#3a87d8;letter-spacing:0.32px;">Franchi S.p.A.</span>
<span style="left:317.3px;top:720px;line-height:11px;font-size:10.05px;color:#383838;letter-spacing:0.32px;">Paolo Accorti</span>
<span style="left:454.1px;top:720px;line-height:11px;font-size:10.05px;color:#383838;letter-spacing:0.183px;">Sales Representative</span>
<span style="left:657.1px;top:720px;line-height:11px;font-size:10.05px;color:#383838;letter-spacing:0.18px;">10100</span>
</div>
<div style="left:270px;top:925.2px;width:700.5px;height:10px;background:#fff;"></div>
<div style="left:270.5px;top:922.2px;width:340.5px;height:2.4px;background:#c2c6d4;border-radius:1px;"></div>
<div style="left:611px;top:922.2px;width:358.5px;height:2.4px;background:#eceef3;"></div>
<div style="left:966.8px;top:226px;width:3px;height:203px;background:#cfd3dd;border-radius:1px;"></div>
<svg style="left:273.65px;top:939.85px" width="13.5" height="13.5" viewBox="0 0 24 24" fill="none" stroke="#6d70d8" stroke-width="2.4" stroke-linecap="round" stroke-linejoin="round" ><path d="M11 4 L3.5 12 L11 20 M19.5 4 L12 12 L19.5 20"/></svg>
<svg style="left:294.05px;top:939.85px" width="13.5" height="13.5" viewBox="0 0 24 24" fill="none" stroke="#6d70d8" stroke-width="2.4" stroke-linecap="round" stroke-linejoin="round" ><path d="M15.5 4 L8 12 L15.5 20"/></svg>
<span style="left:311.9px;top:942px;line-height:11px;font-size:10.2px;color:#6a6a6a;letter-spacing:0.398px;transform:scaleX(1.04);transform-origin:0 0;">Página</span>
<div style="left:350.5px;top:935.5px;width:40.5px;height:24px;background:#fff;border:1px solid #eeeef1;border-radius:3px;box-shadow:0 1px 2.500px rgba(0,0,0,.05);"></div>
<span style="left:368.3px;top:942px;line-height:11px;font-size:10.2px;color:#666;">1</span>
<span style="left:396.6px;top:941px;line-height:14px;font-size:12px;color:#6a6a6a;">/</span>
<span style="left:402.8px;top:942px;line-height:11px;font-size:10.2px;color:#6a6a6a;">1</span>
<svg style="left:414.25px;top:939.85px" width="13.5" height="13.5" viewBox="0 0 24 24" fill="none" stroke="#6d70d8" stroke-width="2.4" stroke-linecap="round" stroke-linejoin="round" ><path d="M8.5 4 L16 12 L8.5 20"/></svg>
<svg style="left:434.65px;top:939.85px" width="13.5" height="13.5" viewBox="0 0 24 24" fill="none" stroke="#6d70d8" stroke-width="2.4" stroke-linecap="round" stroke-linejoin="round" ><path d="M4.5 4 L12 12 L4.5 20 M13 4 L20.5 12 L13 20"/></svg>
<svg style="left:464.25px;top:939.55px" width="14.5" height="14.5" viewBox="0 0 24 24" fill="none" stroke="#5c9e84" stroke-width="1.8" stroke-linecap="round" stroke-linejoin="round" ><path d="M19.5 9 A8 8 0 0 0 5 8 M4.5 15 A8 8 0 0 0 19 16"/><path d="M20 4 V9 H15 M4 20 V15 H9"/></svg>
<span style="left:647.1px;top:942px;line-height:11px;font-size:10.2px;color:#6e6e6e;letter-spacing:0.242px;transform:scaleX(1.04);transform-origin:0 0;">Mostrando desde 1 hasta 91 de 91 registros totales</span>
<div style="left:908.5px;top:936px;width:60.5px;height:23.5px;background:#fff;border:1px solid #eeeef1;border-radius:3px;box-shadow:0 1px 2.500px rgba(0,0,0,.05);"></div>
<span style="left:920px;top:942px;line-height:11px;font-size:10px;color:#555;letter-spacing:-0.543px;">100</span>
<svg style="left:959.80px;top:944.50px" width="7" height="7" viewBox="0 0 24 24" fill="none" stroke="#333" stroke-width="3.2" stroke-linecap="round" stroke-linejoin="round" ><path d="M4 8 L12 16 L20 8"/></svg>
<div style="left:1004px;top:0px;width:1px;height:994px;background:#5e5e5e;"></div>
<div style="left:1005px;top:0px;width:995px;height:29px;background:#3c3c3c;"></div>
<div style="left:1005px;top:29px;width:995px;height:1px;background:#5e5e5e;"></div>
<div style="left:1005px;top:30px;width:995px;height:28px;background:#282828;"></div>
<div style="left:1005px;top:58px;width:995px;height:1px;background:#4a4a4a;"></div>
<div style="left:1005px;top:59px;width:995px;height:28px;background:#282828;"></div>
<div style="left:1005px;top:87px;width:995px;height:1px;background:#4a4a4a;"></div>
<div style="left:1005px;top:88px;width:995px;height:86px;background:#282828;"></div>
<svg style="left:1012.25px;top:5.05px" width="19.5" height="19.5" viewBox="0 0 24 24" fill="none" stroke="#c7c7c7" stroke-width="2" stroke-linecap="round" stroke-linejoin="round" ><path d="M3.500 8.5 V3.5 H8.5 M11 3.5 H14 M16.5 3.5 H20.5 V7 M20.5 9.5 V11 M3.5 11 V14 M3.5 16.5 V20.5 H7 M9.5 20.5 H10.5" stroke-dasharray="1.9 1.9" stroke-linecap="butt"/><path d="M20.5 20.5 L11.5 11.5 M11.5 18.5 V11.5 H18.5"/></svg>
<svg style="left:1042.45px;top:5.25px" width="19.5" height="19.5" viewBox="0 0 24 24" fill="none" stroke="#7cacf8" stroke-width="1.9" stroke-linecap="round" stroke-linejoin="round" ><path d="M4.8 17.5 V4.800 H19.5 M2 19.8 H12.5"/><rect x="15" y="9" width="6.5" height="11" rx="0.8"/></svg>
<div style="left:1072px;top:8px;width:1px;height:15px;background:#5e5e5e;"></div>
<span class="m" style="left:1085.5px;top:10px;line-height:14px;font-size:12.7px;color:#e3e3e3;letter-spacing:-0.020px;">Elements</span>
<span class="m" style="left:1160.5px;top:10px;line-height:14px;font-size:12.7px;color:#e3e3e3;letter-spacing:-0.016px;">Console</span>
<span class="m" style="left:1229.4px;top:10px;line-height:14px;font-size:12.7px;color:#e3e3e3;letter-spacing:-0.315px;">Sources</span>
<span class="m" style="left:1297.3px;top:10px;line-height:14px;font-size:12.7px;color:#a8c7fa;letter-spacing:0.520px;">Network</span>
<span class="m" style="left:1369.2px;top:10px;line-height:14px;font-size:12.7px;color:#e3e3e3;letter-spacing:0.129px;">Performance</span>
<span class="m" style="left:1465.8px;top:10px;line-height:14px;font-size:12.7px;color:#e3e3e3;letter-spacing:0.787px;">Memory</span>
<span class="m" style="left:1537.7px;top:10px;line-height:14px;font-size:12.7px;color:#e3e3e3;letter-spacing:0.457px;">Application</span>
<span class="m" style="left:1627px;top:10px;line-height:14px;font-size:12.7px;color:#e3e3e3;letter-spacing:0.089px;">Security</span>
<span class="m" style="left:1706.2px;top:10px;line-height:14px;font-size:12.7px;color:#e3e3e3;letter-spacing:0.284px;">Lighthouse</span>
<div style="left:1286px;top:27px;width:72.5px;height:3px;background:#a8c7fa;border-radius:3px 3px 0 0;"></div>
<svg style="left:1786.00px;top:8.20px" width="14" height="14" viewBox="0 0 24 24" fill="none" stroke="#c7c7c7" stroke-width="2.5" stroke-linecap="round" stroke-linejoin="round" ><path d="M4 5 L11 12 L4 19 M13 5 L20 12 L13 19"/></svg>
<svg style="left:1810.4px;top:8.5px" width="13" height="13" viewBox="0 0 13 13"><circle cx="6.5" cy="6.5" r="6.2" fill="#e46962"/><path d="M4 4 L9 9 M9 4 L4 9" stroke="#3c3c3c" stroke-width="1.5"/></svg>
<span style="left:1826px;top:10px;line-height:14px;font-size:12.7px;color:#c7c7c7;">1</span>
<svg style="left:1840.6px;top:9.5px" width="12" height="12" viewBox="0 0 12 12"><path d="M0.5 1.5 A1 1 0 0 1 1.5 0.5 H10.5 A1 1 0 0 1 11.5 1.5 V8 A1 1 0 0 1 10.5 9 H3.5 L0.5 12 Z" fill="#e46962"/><path d="M4 2.8 L8 6.8 M8 2.8 L4 6.8" stroke="#3c3c3c" stroke-width="1.3"/></svg>
<span style="left:1854px;top:10px;line-height:14px;font-size:12.7px;color:#c7c7c7;">2</span>
<div style="left:1872px;top:8px;width:1px;height:15px;background:#5e5e5e;"></div>
<svg style="left:1881px;top:3.6px" width="23" height="23" viewBox="0 0 23 23"><circle cx="11.5" cy="11.5" r="11.3" fill="#3b80e4"/><path d="M12 6.3 H7.5 A1.2 1.2 0 0 0 6.3 7.5 V14 A1.2 1.2 0 0 0 7.5 15.2 H9.800 L11.5 17.3 L13.2 15.2 H15.5 A1.2 1.2 0 0 0 16.7 14 V11.5" fill="none" stroke="#fff" stroke-width="1.6" stroke-linejoin="round" stroke-linecap="round"/><path d="M16 3.8 L16.9 6.1 L19.2 7 L16.9 7.9 L16 10.2 L15.1 7.9 L12.8 7 L15.1 6.1 Z" fill="#fff"/></svg>
<svg style="left:1910.25px;top:5.25px" width="19.5" height="19.5" viewBox="0 0 24 24" fill="none" stroke="#c7c7c7" stroke-width="1.8" stroke-linecap="round" stroke-linejoin="round" ><circle cx="12" cy="12" r="2.9" fill="#c7c7c7"/><path d="M10.3 2.8 H13.7 L14.3 5.4 L16.3 6.5 L18.8 5.7 L20.5 8.6 L18.6 10.4 V13.6 L20.5 15.4 L18.8 18.3 L16.3 17.5 L14.3 18.6 L13.7 21.2 H10.3 L9.7 18.6 L7.7 17.5 L5.2 18.3 L3.5 15.4 L5.4 13.6 V10.4 L3.5 8.6 L5.2 5.7 L7.7 6.5 L9.7 5.4 Z"/></svg>
<svg style="left:1947.2px;top:7.0px" width="6" height="16" viewBox="0 0 6 16"><circle cx="3" cy="3" r="1.4" fill="#c7c7c7"/><circle cx="3" cy="8" r="1.4" fill="#c7c7c7"/><circle cx="3" cy="13" r="1.4" fill="#c7c7c7"/></svg>
<svg style="left:1971.85px;top:7.75px" width="14.5" height="14.5" viewBox="0 0 24 24" fill="none" stroke="#c7c7c7" stroke-width="2.5" stroke-linecap="round" stroke-linejoin="round" ><path d="M5 5 L19 19 M19 5 L5 19"/></svg>
<svg style="left:1012.7px;top:34.6px" width="18" height="18" viewBox="0 0 17 17"><circle cx="8.5" cy="8.500" r="7.3" fill="none" stroke="#e67c76" stroke-width="1.5"/><rect x="5.3" y="5.3" width="6.4" height="6.4" rx="0.8" fill="#ee6a64"/></svg>
<svg style="left:1042.80px;top:34.50px" width="18" height="18" viewBox="0 0 24 24" fill="none" stroke="#c7c7c7" stroke-width="1.9" stroke-linecap="round" stroke-linejoin="round" ><circle cx="12" cy="12" r="9.5"/><path d="M5.5 18.5 L18.5 5.5"/></svg>
<div style="left:1072px;top:36px;width:1px;height:16px;background:#5e5e5e;"></div>
<svg style="left:1084px;top:36px" width="18" height="17" viewBox="0 0 18 17"><path d="M1 1.5 H13 L8.5 7.5 V13 H5.5 V7.5 Z" fill="#7cacf8"/><circle cx="14" cy="13.5" r="2" fill="#7cacf8"/></svg>
<svg style="left:1112.55px;top:34.45px" width="17.5" height="17.5" viewBox="0 0 24 24" fill="none" stroke="#c7c7c7" stroke-width="2.2" stroke-linecap="round" stroke-linejoin="round" ><circle cx="10" cy="10" r="6.3"/><path d="M14.8 14.8 L21 21"/></svg>
<div style="left:1141px;top:36px;width:1px;height:16px;background:#5e5e5e;"></div>
<svg style="left:1153px;top:37.7px" width="12.4" height="12.4" viewBox="0 0 12 12"><rect x="0" y="0" width="12" height="12" rx="2" fill="#7cacf8"/><path d="M2.6 6.2 L5 8.6 L9.6 3.6" fill="none" stroke="#1f2a3d" stroke-width="1.7"/></svg>
<span style="left:1172.5px;top:38px;line-height:14px;font-size:12.7px;color:#e3e3e3;letter-spacing:-0.163px;">Preserve log</span>
<div style="left:1252px;top:36px;width:1px;height:16px;background:#5e5e5e;"></div>
<svg style="left:1263.5px;top:37.7px" width="12.4" height="12.4" viewBox="0 0 12 12"><rect x="0" y="0" width="12" height="12" rx="2" fill="#7cacf8"/><path d="M2.6 6.2 L5 8.6 L9.6 3.6" fill="none" stroke="#1f2a3d" stroke-width="1.7"/></svg>
<span style="left:1283.4px;top:38px;line-height:14px;font-size:12.7px;color:#e3e3e3;letter-spacing:-0.231px;">Disable cache</span>
<div style="left:1366px;top:31px;width:120.4px;height:24.8px;border:1px solid #5e5e5e;border-radius:4px;"></div>
<span style="left:1375.5px;top:38px;line-height:14px;font-size:12.7px;color:#e3e3e3;letter-spacing:0.435px;">No throttling</span>
<svg style="left:1470.6px;top:42.2px" width="8" height="4.5" viewBox="0 0 8 5"><path d="M0 0H8L4 5Z" fill="#c7c7c7"/></svg>
<svg style="left:1492.25px;top:33.55px" width="19.5" height="19.5" viewBox="0 0 24 24" fill="none" stroke="#c7c7c7" stroke-width="2" stroke-linecap="round" stroke-linejoin="round" ><path d="M2.5 9 C8 3.5 16 3.5 21.5 9 M5.8 12.5 C9 9.3 13 9 15.5 10.5" stroke-width="2"/><circle cx="8" cy="17.5" r="1.6" fill="#c7c7c7" stroke="none"/><circle cx="17" cy="17.5" r="2.6" stroke-width="1.8"/><path d="M17 13.5 V14.5 M17 20.5 V21.5 M13 17.5 H14 M20 17.5 H21" stroke-width="1.6"/></svg>
<div style="left:1521px;top:36px;width:1px;height:16px;background:#5e5e5e;"></div>
<svg style="left:1531.75px;top:33.45px" width="19.5" height="19.5" viewBox="0 0 24 24" fill="none" stroke="#c7c7c7" stroke-width="1.9" stroke-linecap="round" stroke-linejoin="round" ><path d="M12 16 V4.500 M7.5 9 L12 4.5 L16.5 9 M4.5 15.5 V18.5 Q4.5 20 6 20 H18 Q19.5 20 19.5 18.5 V15.5"/></svg>
<svg style="left:1561.45px;top:33.45px" width="19.5" height="19.5" viewBox="0 0 24 24" fill="none" stroke="#c7c7c7" stroke-width="1.9" stroke-linecap="round" stroke-linejoin="round" ><path d="M12 4 V15 M7.500 10.5 L12 15 L16.5 10.5 M4.5 15.5 V18.5 Q4.5 20 6 20 H18 Q19.5 20 19.5 18.5 V15.5"/></svg>
<div style="left:1960px;top:36px;width:1px;height:16px;background:#5e5e5e;"></div>
<svg style="left:1969.35px;top:33.75px" width="19.5" height="19.5" viewBox="0 0 24 24" fill="none" stroke="#c7c7c7" stroke-width="1.8" stroke-linecap="round" stroke-linejoin="round" ><circle cx="12" cy="12" r="2.9" fill="#c7c7c7"/><path d="M10.3 2.8 H13.7 L14.3 5.4 L16.3 6.5 L18.8 5.7 L20.5 8.6 L18.6 10.4 V13.6 L20.5 15.4 L18.8 18.3 L16.3 17.5 L14.3 18.6 L13.7 21.2 H10.3 L9.7 18.6 L7.7 17.5 L5.2 18.3 L3.5 15.4 L5.4 13.6 V10.4 L3.5 8.6 L5.2 5.7 L7.7 6.5 L9.7 5.4 Z"/></svg>
<div style="left:1010px;top:62.3px;width:233.3px;height:20.6px;background:#3c3c3c;border-radius:10.3px;"></div>
<svg style="left:1020.70px;top:65.90px" width="13" height="13" viewBox="0 0 24 24" fill="none" stroke="#c7c7c7" stroke-width="2" stroke-linecap="round" stroke-linejoin="round" ><path d="M3.5 4.5 H20.5 L13.5 13 V20 H10.5 V13 Z"/></svg>
<span style="left:1040.2px;top:67px;line-height:14px;font-size:12.7px;color:#c7c7c7;letter-spacing:-0.005px;">Filter</span>
<div style="left:1256px;top:66.2px;width:13px;height:13px;border:1.3px solid #8e8e8e;border-radius:2.5px;"></div>
<span style="left:1275.6px;top:67px;line-height:14px;font-size:12.7px;color:#e3e3e3;letter-spacing:0.087px;">Invert</span>
<div style="left:1320px;top:65px;width:1px;height:16px;background:#5e5e5e;"></div>
<span style="left:1340.5px;top:67px;line-height:14px;font-size:12.7px;color:#e3e3e3;letter-spacing:0.218px;">More filters</span>
<svg style="left:1413.5px;top:71.0px" width="8" height="5" viewBox="0 0 8 5"><path d="M0 0H8L4 5Z" fill="#c7c7c7"/></svg>
<div style="left:1440.1px;top:62.2px;width:26.90000000000009px;height:21.3px;border:1px solid #757575;border-radius:7.5px;"></div>
<span class="m3" style="left:1446.4px;top:66px;line-height:13px;font-size:11.7px;color:#e3e3e3;letter-spacing:0.448px;">All</span>
<div style="left:1477.1px;top:62.2px;width:69.40000000000009px;height:21.3px;background:#004a77;border-radius:7.5px;"></div>
<span class="m3" style="left:1483.3px;top:66px;line-height:13px;font-size:11.7px;color:#c2e7ff;letter-spacing:-0.039px;">Fetch/XHR</span>
<div style="left:1551px;top:62.2px;width:34px;height:21.3px;background:#004a77;border-radius:7.5px;"></div>
<span class="m3" style="left:1557.3px;top:66px;line-height:13px;font-size:11.7px;color:#c2e7ff;letter-spacing:0.197px;">Doc</span>
<div style="left:1589.3px;top:62.2px;width:33.200000000000045px;height:21.3px;border:1px solid #757575;border-radius:7.5px;"></div>
<span class="m3" style="left:1595.6px;top:66px;line-height:13px;font-size:11.7px;color:#e3e3e3;letter-spacing:-1.979px;">CSS</span>
<div style="left:1626.5px;top:62.2px;width:23.90000000000009px;height:21.3px;border:1px solid #757575;border-radius:7.5px;"></div>
<span class="m3" style="left:1632.5px;top:66px;line-height:13px;font-size:11.7px;color:#e3e3e3;letter-spacing:-2.054px;">JS</span>
<div style="left:1654.9px;top:62.2px;width:36.69999999999982px;height:21.3px;border:1px solid #757575;border-radius:7.5px;"></div>
<span class="m3" style="left:1661.2px;top:66px;line-height:13px;font-size:11.7px;color:#e3e3e3;letter-spacing:0.263px;">Font</span>
<div style="left:1696.2px;top:62.2px;width:33.899999999999864px;height:21.3px;border:1px solid #757575;border-radius:7.5px;"></div>
<span class="m3" style="left:1702.7px;top:66px;line-height:13px;font-size:11.7px;color:#e3e3e3;letter-spacing:0.548px;">Img</span>
<div style="left:1734.4px;top:62.2px;width:46.5px;height:21.3px;border:1px solid #757575;border-radius:7.5px;"></div>
<span class="m3" style="left:1740.9px;top:66px;line-height:13px;font-size:11.7px;color:#e3e3e3;letter-spacing:0.333px;">Media</span>
<div style="left:1785.5px;top:62.2px;width:58.799999999999955px;height:21.3px;border:1px solid #757575;border-radius:7.5px;"></div>
<span class="m3" style="left:1791.8px;top:66px;line-height:13px;font-size:11.7px;color:#e3e3e3;letter-spacing:0.326px;">Manifest</span>
<div style="left:1849.1px;top:62.2px;width:48.30000000000018px;height:21.3px;border:1px solid #757575;border-radius:7.5px;"></div>
<span class="m3" style="left:1855.6px;top:66px;line-height:13px;font-size:11.7px;color:#e3e3e3;letter-spacing:-0.054px;">Socket</span>
<div style="left:1901.9px;top:62.2px;width:45.5px;height:21.3px;border:1px solid #757575;border-radius:7.5px;"></div>
<span class="m3" style="left:1908.5px;top:66px;line-height:13px;font-size:11.7px;color:#e3e3e3;letter-spacing:-0.104px;">Wasm</span>
<div style="left:1951.5px;top:62.2px;width:43.200000000000045px;height:21.3px;border:1px solid #757575;border-radius:7.5px;"></div>
<span class="m3" style="left:1958px;top:66px;line-height:13px;font-size:11.7px;color:#e3e3e3;letter-spacing:0.360px;">Other</span>
<div style="left:1472px;top:65px;width:1px;height:16px;background:#5e5e5e;"></div>
<div style="left:1121px;top:88px;width:1px;height:85px;background:#4a4a4a;"></div>
<span style="left:1072.5px;top:93px;line-height:12px;font-size:10.7px;color:#e3e3e3;letter-spacing:-0.520px;">20,000 ms</span>
<div style="left:1237px;top:88px;width:1px;height:85px;background:#4a4a4a;"></div>
<span style="left:1188.8px;top:93px;line-height:12px;font-size:10.7px;color:#e3e3e3;letter-spacing:-0.520px;">40,000 ms</span>
<div style="left:1354px;top:88px;width:1px;height:85px;background:#4a4a4a;"></div>
<span style="left:1305.1px;top:93px;line-height:12px;font-size:10.7px;color:#e3e3e3;letter-spacing:-0.520px;">60,000 ms</span>
<div style="left:1470px;top:88px;width:1px;height:85px;background:#4a4a4a;"></div>
<span style="left:1421.4px;top:93px;line-height:12px;font-size:10.7px;color:#e3e3e3;letter-spacing:-0.520px;">80,000 ms</span>
<div style="left:1586px;top:88px;width:1px;height:85px;background:#4a4a4a;"></div>
<span style="left:1532.4px;top:93px;line-height:12px;font-size:10.7px;color:#e3e3e3;letter-spacing:-0.535px;">100,000 ms</span>
<div style="left:1702px;top:88px;width:1px;height:85px;background:#4a4a4a;"></div>
<span style="left:1648.7px;top:93px;line-height:12px;font-size:10.7px;color:#e3e3e3;letter-spacing:-0.535px;">120,000 ms</span>
<div style="left:1819px;top:88px;width:1px;height:85px;background:#4a4a4a;"></div>
<span style="left:1765.0px;top:93px;line-height:12px;font-size:10.7px;color:#e3e3e3;letter-spacing:-0.535px;">140,000 ms</span>
<div style="left:1935px;top:88px;width:1px;height:85px;background:#4a4a4a;"></div>
<span style="left:1881.3px;top:93px;line-height:12px;font-size:10.7px;color:#e3e3e3;letter-spacing:-0.535px;">160,000 ms</span>
<div style="left:1005px;top:88px;width:2px;height:85.5px;background:#1b75b5;"></div>
<div style="left:1005px;top:88px;width:4.8px;height:19px;background:#15609f;border-radius:0 3px 3px 0;"></div>
<div style="left:1007.2px;top:93px;width:1px;height:8px;background:#9ec5f5;"></div>
<div style="left:1007.5px;top:117.7px;width:12px;height:2px;background:#4a8fe0;"></div>
<div style="left:1829.5px;top:113.2px;width:6.3px;height:7.5px;background:#179c8e;"></div>
<div style="left:1831.5px;top:114.5px;width:1.2px;height:5px;background:#5bc6b8;"></div>
<div style="left:1837px;top:117px;width:11.8px;height:2.4px;background:#3f7fe0;"></div>
<div style="left:1998.2px;top:88px;width:1.8px;height:85.5px;background:#1b78b8;"></div>
<div style="left:1994.8px;top:88px;width:5.2px;height:19px;background:#15609f;border-radius:3px 0 0 3px;"></div>
<div style="left:1997.2px;top:93px;width:1px;height:8px;background:#8fc0ee;"></div>
<div style="left:1005px;top:173.2px;width:225px;height:1.3px;background:#2b2b2b;"></div>
<div style="left:1005px;top:174.5px;width:225px;height:27px;background:#282828;"></div>
<span style="left:1010px;top:182px;line-height:14px;font-size:12.7px;color:#e3e3e3;letter-spacing:0.041px;">Name</span>
<div style="left:1005px;top:201.3px;width:225px;height:1.4px;background:#4a4a4a;"></div>
<div style="left:1005px;top:202.7px;width:225px;height:604.3px;background:#1f1f1f;"></div>
<div style="left:1005px;top:202.7px;width:225px;height:22.650000000000002px;background:#282828;"></div>
<svg style="left:1010.4px;top:207.87499999999997px" width="14.4" height="12.6" viewBox="0 0 15 14" preserveAspectRatio="none" fill="none" stroke="#e8925c" stroke-width="1.9" stroke-linecap="round" stroke-linejoin="round"><path d="M5 1.5 H4 A1.5 1.5 0 0 0 2.5 3 V5.2 L1.2 7 L2.5 8.8 V11 A1.5 1.5 0 0 0 4 12.5 H5"/><path d="M10 1.5 H11 A1.5 1.5 0 0 1 12.5 3 V5.2 L13.8 7 L12.5 8.8 V11 A1.5 1.5 0 0 1 11 12.5 H10"/><circle cx="7.5" cy="4.6" r="0.5" fill="#e8925c"/><path d="M7.5 7.2 V10.2 L6.5 11"/></svg>
<span style="left:1029.7px;top:208px;line-height:14px;font-size:12.7px;color:#e3e3e3;letter-spacing:-0.285px;">Retrieve</span>
<div style="left:1005px;top:225.2px;width:225px;height:22.650000000000002px;background:#1f1f1f;"></div>
<svg style="left:1010.4px;top:230.42499999999998px" width="14.4" height="12.6" viewBox="0 0 15 14" preserveAspectRatio="none" fill="none" stroke="#e8925c" stroke-width="1.9" stroke-linecap="round" stroke-linejoin="round"><path d="M5 1.5 H4 A1.5 1.5 0 0 0 2.5 3 V5.2 L1.2 7 L2.5 8.8 V11 A1.5 1.5 0 0 0 4 12.5 H5"/><path d="M10 1.5 H11 A1.5 1.5 0 0 1 12.5 3 V5.2 L13.8 7 L12.5 8.8 V11 A1.5 1.5 0 0 1 11 12.5 H10"/><circle cx="7.5" cy="4.6" r="0.5" fill="#e8925c"/><path d="M7.5 7.2 V10.2 L6.5 11"/></svg>
<span style="left:1029.7px;top:230px;line-height:14px;font-size:12.7px;color:#e3e3e3;letter-spacing:-0.388px;">List</span>
<div style="left:1005px;top:247.8px;width:225px;height:22.650000000000002px;background:#474747;"></div>
<svg style="left:1010.4px;top:252.97499999999997px" width="14.4" height="12.6" viewBox="0 0 15 14" preserveAspectRatio="none" fill="none" stroke="#e8925c" stroke-width="1.9" stroke-linecap="round" stroke-linejoin="round"><path d="M5 1.5 H4 A1.5 1.5 0 0 0 2.5 3 V5.2 L1.2 7 L2.5 8.8 V11 A1.5 1.5 0 0 0 4 12.5 H5"/><path d="M10 1.5 H11 A1.5 1.5 0 0 1 12.5 3 V5.2 L13.8 7 L12.5 8.8 V11 A1.5 1.5 0 0 1 11 12.5 H10"/><circle cx="7.5" cy="4.6" r="0.5" fill="#e8925c"/><path d="M7.5 7.2 V10.2 L6.5 11"/></svg>
<span style="left:1029.7px;top:253px;line-height:14px;font-size:12.7px;color:#e3e3e3;letter-spacing:0.109px;">Update</span>
<div style="left:1005px;top:270.4px;width:225px;height:22.650000000000002px;background:#1f1f1f;"></div>
<svg style="left:1010.4px;top:275.525px" width="14.4" height="12.6" viewBox="0 0 15 14" preserveAspectRatio="none" fill="none" stroke="#e8925c" stroke-width="1.9" stroke-linecap="round" stroke-linejoin="round"><path d="M5 1.5 H4 A1.5 1.5 0 0 0 2.5 3 V5.2 L1.2 7 L2.5 8.8 V11 A1.5 1.5 0 0 0 4 12.5 H5"/><path d="M10 1.5 H11 A1.5 1.5 0 0 1 12.5 3 V5.2 L13.8 7 L12.5 8.8 V11 A1.5 1.5 0 0 1 11 12.5 H10"/><circle cx="7.5" cy="4.6" r="0.5" fill="#e8925c"/><path d="M7.5 7.2 V10.2 L6.5 11"/></svg>
<span style="left:1029.7px;top:276px;line-height:14px;font-size:12.7px;color:#e3e3e3;letter-spacing:0.041px;">Lookup.Northwind.Customer?v=...</span>
<div style="left:1005px;top:292.9px;width:225px;height:22.650000000000002px;background:#282828;"></div>
<svg style="left:1010.4px;top:298.07499999999993px" width="14.4" height="12.6" viewBox="0 0 15 14" preserveAspectRatio="none" fill="none" stroke="#e8925c" stroke-width="1.9" stroke-linecap="round" stroke-linejoin="round"><path d="M5 1.5 H4 A1.5 1.5 0 0 0 2.5 3 V5.2 L1.2 7 L2.5 8.8 V11 A1.5 1.5 0 0 0 4 12.5 H5"/><path d="M10 1.5 H11 A1.5 1.5 0 0 1 12.5 3 V5.2 L13.8 7 L12.5 8.8 V11 A1.5 1.5 0 0 1 11 12.5 H10"/><circle cx="7.5" cy="4.6" r="0.5" fill="#e8925c"/><path d="M7.5 7.2 V10.2 L6.5 11"/></svg>
<span style="left:1029.7px;top:298px;line-height:14px;font-size:12.7px;color:#e3e3e3;letter-spacing:-0.388px;">List</span>
<div style="left:1230px;top:173.3px;width:1px;height:663.7px;background:#5e5e5e;"></div>
<div style="left:1005px;top:806.5px;width:225px;height:1px;background:#4a4a4a;"></div>
<div style="left:1005px;top:807.5px;width:225px;height:29.5px;background:#282828;"></div>
<span style="left:1015.6px;top:817px;line-height:14px;font-size:12.7px;color:#c7c7c7;letter-spacing:-0.078px;">5 requests</span>
<div style="left:1084px;top:814px;width:1px;height:17px;background:#5e5e5e;"></div>
<span style="left:1095.6px;top:817px;line-height:14px;font-size:12.7px;color:#c7c7c7;letter-spacing:-0.134px;">10.5 kB transferred</span>
<div style="left:1212px;top:814px;width:1px;height:17px;background:#5e5e5e;"></div>
<div style="left:1231px;top:173.3px;width:769px;height:28.2px;background:#3c3c3c;"></div>
<div style="left:1231px;top:201.5px;width:769px;height:1.2px;background:#353535;"></div>
<svg style="left:1245.05px;top:181.25px" width="13.5" height="13.5" viewBox="0 0 24 24" fill="none" stroke="#c7c7c7" stroke-width="2.5" stroke-linecap="round" stroke-linejoin="round" ><path d="M5 5 L19 19 M19 5 L5 19"/></svg>
<span class="m" style="left:1280.4px;top:183px;line-height:14px;font-size:12.7px;color:#e3e3e3;letter-spacing:-0.068px;">Headers</span>
<span class="m" style="left:1350.4px;top:183px;line-height:14px;font-size:12.7px;color:#a8c7fa;letter-spacing:-0.149px;">Payload</span>
<span class="m" style="left:1417.8px;top:183px;line-height:14px;font-size:12.7px;color:#e3e3e3;letter-spacing:-0.029px;">Preview</span>
<span class="m" style="left:1485.4px;top:183px;line-height:14px;font-size:12.7px;color:#e3e3e3;letter-spacing:-0.341px;">Response</span>
<span class="m" style="left:1562.9px;top:183px;line-height:14px;font-size:12.7px;color:#e3e3e3;letter-spacing:0.519px;">Initiator</span>
<span class="m" style="left:1631.3px;top:183px;line-height:14px;font-size:12.7px;color:#e3e3e3;letter-spacing:0.513px;">Timing</span>
<span class="m" style="left:1693.7px;top:183px;line-height:14px;font-size:12.7px;color:#e3e3e3;letter-spacing:-0.114px;">Cookies</span>
<div style="left:1339.3px;top:199.3px;width:67.4px;height:3.2px;background:#a8c7fa;border-radius:3px 3px 0 0;"></div>
<div style="left:1231px;top:202.7px;width:769px;height:2.5px;background:#282828;"></div>
<div style="left:1231px;top:205.2px;width:769px;height:33.4px;background:#3c3c3c;"></div>
<svg style="left:1242.8px;top:220.2px" width="7.5" height="4.5" viewBox="0 0 8 5"><path d="M0 0H8L4 5Z" fill="#c7c7c7"/></svg>
<span style="left:1253.5px;top:216px;line-height:14px;font-size:12.4px;color:#e3e3e3;font-weight:700;letter-spacing:-0.037px;">Request Payload</span>
<div style="left:1384.8px;top:209px;width:98.9px;height:26px;border:1px solid #1b5a87;border-radius:13px;"></div>
<span class="m" style="left:1399.1px;top:216px;line-height:14px;font-size:12.7px;color:#a8c7fa;letter-spacing:0.104px;">View parsed</span>
<div style="left:1231px;top:238.6px;width:769px;height:92.4px;background:#282828;"></div>
<span style="left:1257.8px;top:245px;line-height:14px;font-size:12.7px;color:#e3e3e3;letter-spacing:-0.066px;">{"Entity":{"CompanyName":"Alfreds Futterkiste","ContactName":"cesar beas suarez","ContactTitle":"Sales Representative","Represen</span>
<span style="left:1257.8px;top:267px;line-height:14px;font-size:12.7px;color:#e3e3e3;letter-spacing:-0.038px;">tatives":[],"Address":"Obere Str. 57","Country":"Germany","City":"Berlin","Region":"","PostalCode":"12209","Phone":"030-0074321","F</span>
<span style="left:1257.8px;top:288px;line-height:14px;font-size:12.7px;color:#e3e3e3;letter-spacing:-0.073px;">ax":"030-0076545","NoteList":[],"LastContactDate":null,"LastContactedBy":"","Email":"","SendBulletin":false,"CustomerID":"ALFKI"},"E</span>
<span style="left:1257.8px;top:309px;line-height:14px;font-size:12.7px;color:#e3e3e3;letter-spacing:-0.079px;">ntityId":"ALFKI"}</span>
<div style="left:1231px;top:331px;width:769px;height:1px;background:#4a4a4a;"></div>
<div style="left:1231px;top:332px;width:769px;height:505px;background:#282828;"></div>
<div style="left:1005px;top:837px;width:995px;height:1.3px;background:#5e5e5e;"></div>
<div style="left:1005px;top:838.3px;width:995px;height:28px;background:#3c3c3c;"></div>
<div style="left:1005px;top:866.3px;width:995px;height:1px;background:#5e5e5e;"></div>
<div style="left:1005px;top:867.3px;width:995px;height:127px;background:#3c3c3c;"></div>
<svg style="left:1018.9px;top:844.0px" width="6" height="16" viewBox="0 0 6 16"><circle cx="3" cy="3" r="1.4" fill="#c7c7c7"/><circle cx="3" cy="8" r="1.4" fill="#c7c7c7"/><circle cx="3" cy="13" r="1.4" fill="#c7c7c7"/></svg>
<span class="m" style="left:1045.8px;top:847px;line-height:14px;font-size:12.7px;color:#e3e3e3;letter-spacing:-0.066px;">Console</span>
<span class="m" style="left:1114.4px;top:847px;line-height:14px;font-size:12.7px;color:#e3e3e3;letter-spacing:-0.069px;">AI assistance</span>
<span class="m" style="left:1221.8px;top:847px;line-height:14px;font-size:12.7px;color:#a8c7fa;letter-spacing:0.184px;">What's new</span>
<span class="m" style="left:1322.2px;top:847px;line-height:14px;font-size:12.7px;color:#e3e3e3;letter-spacing:0.040px;">Developer resources</span>
<span class="m" style="left:1473.3px;top:847px;line-height:14px;font-size:12.7px;color:#e3e3e3;letter-spacing:-0.348px;">Search</span>
<span class="m" style="left:1545.5px;top:847px;line-height:14px;font-size:12.7px;color:#e3e3e3;letter-spacing:-0.441px;">Issues</span>
<svg style="left:1292.80px;top:847.80px" width="10" height="10" viewBox="0 0 24 24" fill="none" stroke="#c7c7c7" stroke-width="2.4" stroke-linecap="round" stroke-linejoin="round" ><path d="M5 5 L19 19 M19 5 L5 19"/></svg>
<div style="left:1211.3px;top:863.5px;width:99.3px;height:3.2px;background:#a8c7fa;border-radius:3px 3px 0 0;"></div>
<svg style="left:1941.70px;top:843.50px" width="17" height="17" viewBox="0 0 24 24" fill="none" stroke="#c7c7c7" stroke-width="1.9" stroke-linecap="round" stroke-linejoin="round" ><rect x="3.5" y="3.5" width="17" height="17" rx="1"/><path d="M14.5 3.5 V20.5"/></svg>
<svg style="left:1971.85px;top:845.05px" width="14.5" height="14.5" viewBox="0 0 24 24" fill="none" stroke="#c7c7c7" stroke-width="2.5" stroke-linecap="round" stroke-linejoin="round" ><path d="M5 5 L19 19 M19 5 L5 19"/></svg>
<svg style="left:1206.8px;top:884.2px" width="34.8" height="34.8" viewBox="0 0 36 36"><circle cx="18" cy="18" r="17.6" fill="#1565d8"/><circle cx="18" cy="18" r="14.2" fill="none" stroke="#fff" stroke-width="2"/><circle cx="18" cy="18" r="5.8" fill="none" stroke="#fff" stroke-width="2"/><path d="M18 12.2 H31 M12.98 20.9 L6.5 9.7 M23.02 20.9 L16.5 32.1" stroke="#fff" stroke-width="2" fill="none"/></svg>
<span class="m3" style="left:1252.7px;top:892px;line-height:20px;font-size:17.4px;color:#e3e3e3;letter-spacing:-0.141px;">What's new in DevTools 146</span>
<div style="left:1207px;top:935px;width:144px;height:26.2px;background:#a8c7fa;border-radius:13.1px;"></div>
<span class="m" style="left:1220.8px;top:943px;line-height:14px;font-size:12.7px;color:#062e6f;letter-spacing:0.043px;">See all new features</span>
<div style="left:1188.6px;top:983px;width:611px;height:30px;background:#1f1f1f;border-radius:16px;"></div>
<div style="left:0px;top:0px;width:2000px;height:1px;background:#4b4b4b;"></div>
<div style="left:1985.4px;top:867.3px;width:14.6px;height:127px;background:#2c2c2c;"></div>
<svg style="left:1988px;top:871.5px" width="9" height="7" viewBox="0 0 9 7"><path d="M4.5 0.5 L8.8 6.5 H0.2 Z" fill="#9e9e9e"/></svg>
<div style="left:1988.4px;top:884.3px;width:8.3px;height:23.2px;background:#9e9e9e;border-radius:4.2px;"></div>
<svg style="left:1988px;top:983.2px" width="9" height="7" viewBox="0 0 9 7"><path d="M4.5 6.5 L8.8 0.5 H0.2 Z" fill="#9e9e9e"/></svg>
</body></html>
